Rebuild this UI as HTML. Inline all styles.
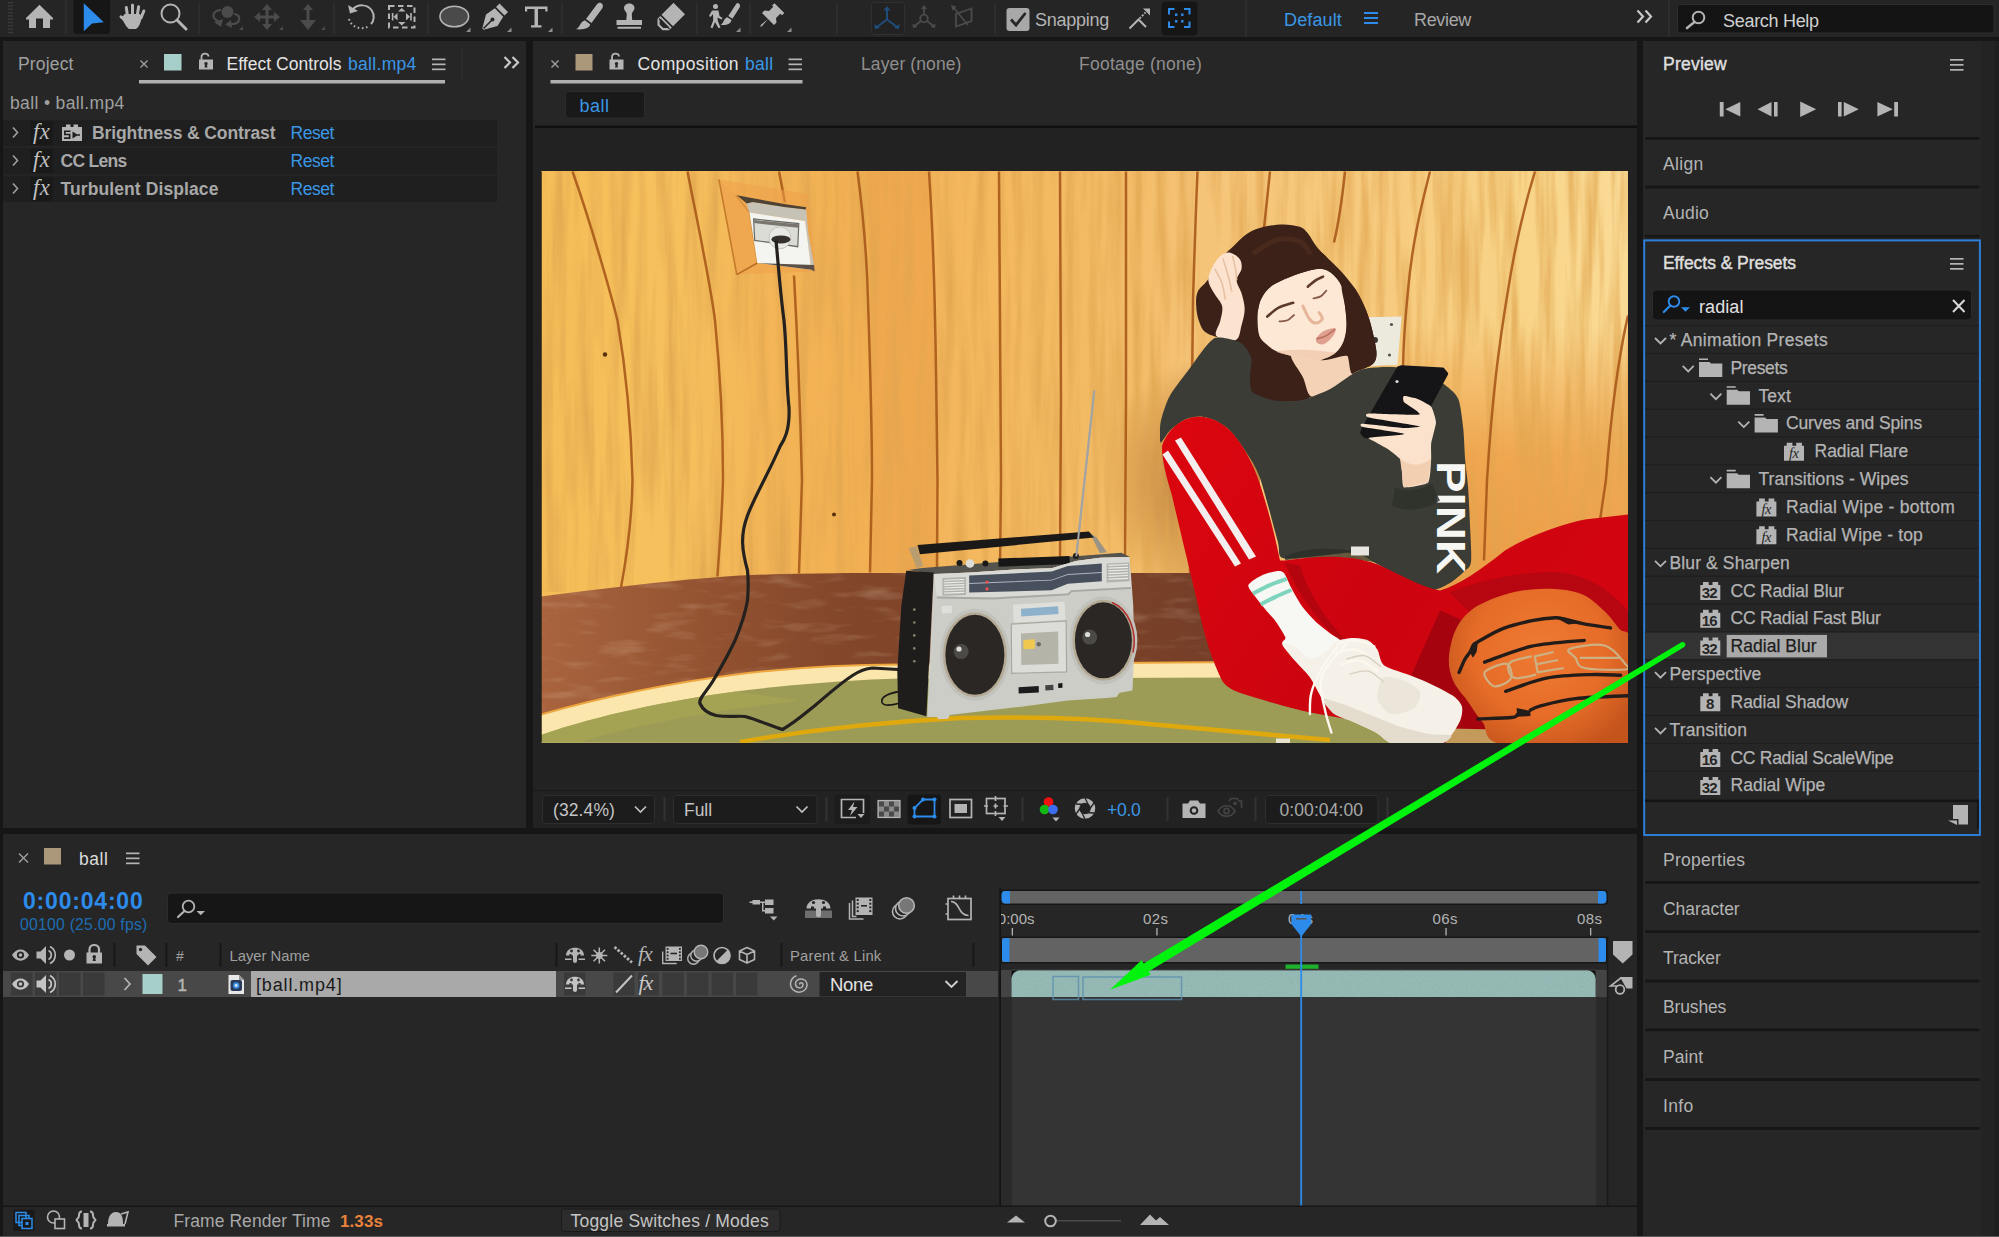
<!DOCTYPE html>
<html lang="en">
<head>
<meta charset="utf-8">
<title>After Effects - ball</title>
<style>
*{box-sizing:border-box;margin:0;padding:0}
html,body{width:1999px;height:1237px;overflow:hidden;background:#161616}
body{font-family:"Liberation Sans",sans-serif;color:#b4b4b4;font-size:17px;position:relative}
.a{position:absolute}
.p{position:absolute;background:#262626}
.t{margin-top:1.200px;position:absolute;white-space:nowrap;line-height:1;transform-origin:0 0;letter-spacing:-0.2px}
.w{color:#e6e6e6}
.b{color:#3a97e6}
.g{color:#a8a8a8}
.d{color:#8a8a8a}
.ln{position:absolute;background:#161616}
svg{position:absolute;overflow:visible}
.sb{-webkit-text-stroke:0.45px currentColor}
.tr{font-size:17.500px;color:#b4b4b4;-webkit-text-stroke:0.250px currentColor}
</style>
</head>
<body>
<!-- panel backgrounds -->
<div class="p" style="left:0;top:0;width:1999px;height:37px;background:#252525"></div>
<div class="p" style="left:3px;top:41px;width:523px;height:787px"></div>
<div class="p" style="left:533px;top:41px;width:1104px;height:787px"></div>
<div class="p" style="left:3px;top:834px;width:1634px;height:403px"></div>
<div class="p" style="left:1643px;top:41px;width:356px;height:1196px"></div>
<div class="p" style="left:1980.700px;top:41px;width:18.300px;height:1196px;background:#232323"></div>
<div class="p" style="left:1994px;top:41px;width:5px;height:1196px;background:#1f1f1f"></div>
<div class="a" style="left:533px;top:128px;width:1104px;height:662px;background:#222"></div>
<div class="a" style="left:0;top:1236px;width:1999px;height:1px;background:#5a5a5a"></div>
<!-- toolbar -->
<svg class="a" style="left:0;top:0" width="1999" height="41" viewBox="0 0 1999 41">
<g fill="#3a3a3a"><rect x="8" y="2" width="5" height="1.4"/><rect x="8" y="5.3" width="5" height="1.4"/><rect x="8" y="8.6" width="5" height="1.4"/><rect x="8" y="11.9" width="5" height="1.4"/><rect x="8" y="15.2" width="5" height="1.4"/><rect x="8" y="18.5" width="5" height="1.4"/><rect x="8" y="21.8" width="5" height="1.4"/><rect x="8" y="25.1" width="5" height="1.4"/><rect x="8" y="28.4" width="5" height="1.4"/><rect x="8" y="31.7" width="5" height="1.4"/></g>
<g fill="#2d2d2d"><rect x="65" y="0" width="2" height="34"/><rect x="198" y="3" width="2" height="31"/><rect x="333" y="3" width="2" height="31"/><rect x="427" y="3" width="2" height="31"/><rect x="561" y="3" width="2" height="31"/><rect x="696" y="3" width="2" height="31"/><rect x="749" y="3" width="2" height="31"/><rect x="836" y="3" width="2" height="31"/><rect x="994" y="3" width="2" height="31"/><rect x="1245" y="0" width="2" height="37"/><rect x="1668" y="0" width="2" height="37"/></g>
<!-- home -->
<path fill="#b4b4b4" d="M39.5 4.8 L53 18 L53 19.5 L50 19.5 L50 28 L43 28 L43 18.5 L36 18.5 L36 28 L29 28 L29 19.5 L26 19.5 L26 18 Z"/>
<!-- selection tool -->
<rect x="73.5" y="-3" width="36.5" height="37" rx="4" fill="#161616"/>
<path fill="#2d8ceb" d="M83.8 3.2 L103.8 22.3 L92 23.4 L83.8 31.2 Z"/>
<!-- hand -->
<g fill="none" stroke="#b4b4b4" stroke-width="3" stroke-linecap="round"><path d="M127.3 15 L126.3 7.5"/><path d="M132.5 14 L132.5 5"/><path d="M137.3 15 L138.6 6.8"/><path d="M141 18 L143.8 11"/><path d="M125 20 L121 16.8"/></g>
<path fill="#b4b4b4" d="M124.5 14 L140 14 L141.5 17 C141 23 139 27 136 29 L129 29 C126 27 124 22 121.5 18.5 Z"/>
<!-- zoom -->
<circle cx="170.5" cy="13.5" r="9" fill="none" stroke="#b4b4b4" stroke-width="2"/>
<path d="M177 20 L186 29" stroke="#b4b4b4" stroke-width="3" stroke-linecap="round"/>
<!-- orbit (dim) -->
<g fill="#4b4b4b" stroke="none"><circle cx="227.5" cy="12" r="6"/><path d="M239 30 L243 26 L243 30Z"/><path d="M279 30 L283 26 L283 30Z"/><path d="M321 30 L325 26 L325 30Z"/></g>
<g fill="none" stroke="#4b4b4b" stroke-width="2.2"><path d="M221 10 C214 10 211 16 216 20 L219 22"/><path d="M234 14 C241 15 241 22 234 24 L229 24"/></g>
<path fill="#4b4b4b" d="M214 22 L223 19 L221 27Z M231 20 L225 24.5 L232 28Z"/>
<!-- pan (dim) -->
<path fill="#4b4b4b" d="M267 4 L272 10 L268.5 10 L268.5 15.5 L274 15.5 L274 12 L280 17 L274 22 L274 18.5 L268.5 18.5 L268.5 24 L272 24 L267 30 L262 24 L265.5 24 L265.5 18.5 L260 18.5 L260 22 L254 17 L260 12 L260 15.5 L265.5 15.5 L265.5 10 L262 10Z"/>
<!-- dolly (dim) -->
<path fill="#4b4b4b" d="M308 4 L313 10 L309.5 10 L309.5 20 L316 20 L308 30 L300 20 L306.5 20 L306.5 10 L303 10Z"/>
<!-- rotate -->
<path fill="none" stroke="#b4b4b4" stroke-width="2" d="M353 9 C358 4 367 4 371.5 10 C375 15 374 21 371 24"/>
<path fill="#b4b4b4" d="M348 5 L350 13.5 L358 11Z"/>
<path fill="none" stroke="#b4b4b4" stroke-width="2" stroke-dasharray="1.6 2.6" d="M349 19 C351 27 362 31 369 26"/>
<!-- dashed rect w/ arrows -->
<rect x="389" y="6" width="25.5" height="21.5" fill="none" stroke="#b4b4b4" stroke-width="2" stroke-dasharray="5.5 3.5"/>
<path fill="#b4b4b4" d="M398 11.500 L401.800 8 L405.500 11.500Z M398 22 L401.800 25.500 L405.500 22Z M397.500 13 L397.500 20.500 L393.500 16.750Z M406 13 L406 20.500 L410 16.750Z M391.800 13 h1.600 v7.500 h-1.600Z M410.200 13 h1.600 v7.500 h-1.600Z"/>
<!-- ellipse -->
<ellipse cx="454.3" cy="16.5" rx="14.3" ry="10.3" fill="#4a4a4a" stroke="#b4b4b4" stroke-width="1.6"/>
<g fill="#8c8c8c"><path d="M466 32 L470.5 27.5 L470.5 32Z"/><path d="M507 32 L511.5 27.5 L511.5 32Z"/><path d="M548 32 L552.5 27.5 L552.5 32Z"/><path d="M736 32 L740.5 27.5 L740.5 32Z"/><path d="M787 32 L791.5 27.5 L791.5 32Z"/></g>
<!-- pen -->
<path fill="#b4b4b4" d="M499.5 3.5 L508 12 L504.5 15.5 L496 7Z M494.8 8.3 L503.2 16.7 L497.5 26 L483.5 29.8 L482.3 28.6 L486 14.5Z"/>
<path d="M483.5 28.5 L491.5 20.5" stroke="#252525" stroke-width="1.6"/><circle cx="492.5" cy="19.5" r="2" fill="#252525"/>
<!-- T -->
<path fill="#b4b4b4" d="M525 6.5 L547.5 6.5 L547.5 11.5 L545.3 11.5 L545.3 9 L538 9 L538 25.3 L541.5 25.3 L541.5 27.5 L531 27.5 L531 25.3 L534.5 25.3 L534.5 9 L527.2 9 L527.2 11.5 L525 11.5Z"/>
<!-- brush -->
<path fill="#b4b4b4" d="M600.500 2.800 C603 3.800 603.500 6.300 602.300 8.200 L591.500 23 L586 19 L597 4.200 C598 2.900 599.300 2.400 600.500 2.800Z M584.800 20.300 L590.200 24.300 C589.500 28 585 30 576 29.300 C580.500 27 579.500 22.500 584.800 20.300Z"/>
<!-- stamp -->
<path fill="#b4b4b4" d="M629.3 3.5 C633 3.5 634.5 6 634.5 8 C634.5 10.5 632 12 631.8 14 L632.2 20 L642 20 L642 25 L616.5 25 L616.5 20 L626.3 20 L626.8 14 C626.5 12 624 10.500 624 8 C624 6 625.600 3.500 629.3 3.500Z M617.500 26.800 L641 26.800 L641 28.800 L617.500 28.800Z"/>
<!-- eraser -->
<path fill="#b4b4b4" d="M673.5 2.8 L685 14.3 L673 26.300 L661.500 14.800Z M660.300 16 L671.800 27.500 L669 30.300 L662.500 30.300 L657.500 25.300 L657.500 18.800Z"/>
<path d="M659 18.500 L669.500 29" stroke="#252525" stroke-width="1.200" fill="none"/>
<path fill="#252525" d="M660.900 19 L668.800 26.900 L667.600 28.100 L663.300 28.100 L659.600 24.400 L659.600 20.300Z"/>
<!-- roto -->
<g fill="#b4b4b4"><circle cx="715.5" cy="6.500" r="2.500"/><path d="M712 10.500 L718.500 10.500 L719.500 16 L722.500 18 L721.500 19.500 L717.500 17.500 L717.800 21 L720.500 27.500 L718.500 28.300 L715 22 L712.500 28.300 L710.500 27.600 L713.200 20.500 L713 14 L710.500 17 L709 16Z"/>
<path d="M738.300 3.200 C740.300 4 740.500 6 739.600 7.500 L732.500 18.800 L728.300 16 L735.800 4.500 C736.500 3.400 737.400 2.900 738.300 3.200Z M727.300 17.200 L731.500 20 C731 23.500 727.500 25.500 720.500 25 C724 23.300 723 19 727.300 17.200Z"/></g>
<!-- pin -->
<path fill="#b4b4b4" d="M774.500 3.200 L784.300 13 L782 15.300 L780.300 13.800 L776 18 L776.500 22.500 L774 25 L768 19 L762 26.300 L760.300 26.800 L760.800 25 L768 19 L762 13 L764.500 10.500 L769 11 L773.300 6.800 L772 5.500Z"/>
<!-- axis modes (dim) -->
<rect x="871.5" y="2.500" width="33" height="32" rx="3" fill="#222" stroke="#303030" stroke-width="1"/>
<g stroke="#1f4d7a" stroke-width="2" fill="none"><path d="M887 19.500 L887 8 M887 19.500 L877 27 M887 19.500 L897 27"/></g>
<path fill="#1f4d7a" d="M883.500 10.500 L887 6 L890.500 10.500Z M874.500 24 L875 29 L880 28Z M899.500 24 L899 29 L894 28Z"/>
<g stroke="#4b4b4b" stroke-width="1.800" fill="none"><circle cx="924" cy="18.500" r="3.800"/><path d="M924 14.500 L924 7.500 M921 21 L914.500 26 M927 21 L933.500 26"/></g>
<path fill="#4b4b4b" d="M921 9 L924 5 L927 9Z M912.500 23.500 L913 28 L917.500 27Z M935.500 23.500 L935 28 L930.500 27Z"/>
<g stroke="#4b4b4b" stroke-width="1.800" fill="none"><path d="M956 14 L971.500 8.500 L971.500 21 L956 26.500Z M953 7 L968 25"/></g>
<path fill="#4b4b4b" d="M951 5 L956.500 6.500 L952.500 10.500Z"/>
<!-- snapping checkbox -->
<rect x="1006.500" y="8" width="23" height="23" rx="3" fill="#a8a8a8"/>
<path d="M1011 19.500 L1016 25 L1025.500 13" stroke="#252525" stroke-width="2.800" fill="none"/>
<!-- snap icon 1 -->
<path d="M1129.500 28.500 L1138.500 19.500 L1146 27" stroke="#b4b4b4" stroke-width="2" fill="none"/>
<path d="M1139.500 18.500 L1145.500 12.500" stroke="#b4b4b4" stroke-width="1.800" stroke-dasharray="2 1.500" fill="none"/>
<path fill="#b4b4b4" d="M1143 8.500 L1150 8.500 L1150 15.500Z"/>
<!-- snap icon 2 -->
<rect x="1161.500" y="1.500" width="36" height="34" rx="4" fill="#161616"/>
<g stroke="#2d8ceb" stroke-width="2" fill="none"><path d="M1169 14.500 L1169 9 L1174.500 9 M1184 9 L1189.500 9 L1189.500 14.500 M1189.500 21.500 L1189.500 27 L1184 27 M1174.500 27 L1169 27 L1169 21.500"/><path d="M1176 16 L1176 14.500 L1177.500 14.500 M1181 14.500 L1182.500 14.500 L1182.500 16 M1182.500 20 L1182.500 21.500 L1181 21.500 M1177.500 21.500 L1176 21.500 L1176 20"/></g>
<!-- workspace hamburger -->
<g fill="#2d8ceb"><rect x="1364" y="12" width="14" height="2"/><rect x="1364" y="17" width="14" height="2"/><rect x="1364" y="22" width="14" height="2"/></g>
<!-- chevrons -->
<path d="M1637.500 10.500 L1643 16.500 L1637.500 22.500 M1645.500 10.500 L1651 16.500 L1645.500 22.500" stroke="#c8c8c8" stroke-width="2.200" fill="none"/>
<!-- search help -->
<rect x="1677.500" y="4.500" width="316.500" height="28.500" rx="3" fill="#141414" stroke="#2c2c2c" stroke-width="1"/>
<circle cx="1698.500" cy="17.500" r="5.800" fill="none" stroke="#b4b4b4" stroke-width="2"/>
<path d="M1694.500 22 L1687 28" stroke="#b4b4b4" stroke-width="2.600" stroke-linecap="round"/>
</svg>
<div class="t" style="left:1035px;top:10px;font-size:18px;color:#b4b4b4;letter-spacing:-0.26px">Snapping</div>
<div class="t b" style="left:1284px;top:10px;font-size:18px;letter-spacing:0.14px">Default</div>
<div class="t" style="left:1414px;top:10px;font-size:18px;color:#a8a8a8;letter-spacing:-0.34px">Review</div>
<div class="t" style="left:1723px;top:11px;font-size:18px;color:#d0d0d0;letter-spacing:-0.30px">Search Help</div>
<!-- left panel: project / effect controls -->
<div class="t" style="left:18px;top:55px;font-size:17.5px;color:#a0a0a0;letter-spacing:0.16px">Project</div>
<svg class="a" style="left:0;top:41px" width="530" height="170" viewBox="0 41 530 170">
<path d="M140.500 60.500 L147.500 67.500 M147.500 60.500 L140.500 67.500" stroke="#a0a0a0" stroke-width="1.400"/>
<rect x="164" y="54" width="17.500" height="16.500" fill="#a6cfca"/>
<path d="M201.500 60 L201.500 57 C201.500 52.500 208.500 52.500 208.500 56.500" fill="none" stroke="#b4b4b4" stroke-width="1.800"/>
<rect x="199" y="59.500" width="14" height="10" fill="#b4b4b4"/>
<path d="M206 62 a1.700 1.700 0 1 1 -0.010 0Z M205.200 64 h1.600 l0.700 3.500 h-3Z" fill="#262626"/>
<g fill="#b4b4b4"><rect x="432" y="58.500" width="13.500" height="1.700"/><rect x="432" y="63.500" width="13.500" height="1.700"/><rect x="432" y="68.500" width="13.500" height="1.700"/></g>
<rect x="461" y="48" width="1.500" height="32" fill="#2e2e2e"/>
<path d="M504.500 57 L510 62.500 L504.500 68 M512.500 57 L518 62.500 L512.500 68" stroke="#c8c8c8" stroke-width="2.200" fill="none"/>
<rect x="139" y="80" width="306" height="3.500" fill="#b0b0b0"/>
<!-- effect rows -->
<rect x="3" y="119" width="494" height="84" fill="#1f1f1f"/>
<rect x="3" y="118.500" width="494" height="1" fill="#2a2a2a"/>
<rect x="3" y="146.500" width="494" height="1" fill="#2a2a2a"/>
<rect x="3" y="174.500" width="494" height="1" fill="#2a2a2a"/>
<rect x="3" y="202.500" width="494" height="1" fill="#2a2a2a"/>
<g stroke="#a0a0a0" stroke-width="1.600" fill="none"><path d="M13 127.500 L17.500 132.500 L13 137.500"/><path d="M13 155.500 L17.500 160.500 L13 165.500"/><path d="M13 183.500 L17.500 188.500 L13 193.500"/></g>
<g fill="#191919"><rect x="30.500" y="121" width="22" height="24"/><rect x="30.500" y="149" width="22" height="24"/><rect x="30.500" y="177" width="22" height="24"/></g>
<!-- preset icon -->
<path fill="#b4b4b4" d="M62 127 L66 127 L66 124.500 L70.500 124.500 L70.500 127 L73.500 127 L73.500 124.500 L78 124.500 L78 127 L82 127 L82 141 L62 141Z"/>
<path fill="#1f1f1f" d="M64 130.500 h6.500 v1.600 h-4.800 v1.600 h4.800 v5.200 h-6.500 v-1.600 h4.800 v-2 h-4.800Z M72.500 131.500 l5.500 3.500 l-5.500 3.500Z M72.500 134.200 h7.500 v1.600 h-7.500Z"/>
</svg>
<div class="t" style="left:10px;top:94px;font-size:17.500px;color:#a0a0a0;letter-spacing:0.36px">ball • ball.mp4</div>
<div class="t w" style="left:226.500px;top:55px;font-size:17.500px;color:#e4e4e4;letter-spacing:0.04px">Effect Controls</div>
<div class="t b" style="left:348px;top:55px;font-size:17.500px;letter-spacing:0.31px">ball.mp4</div>
<div class="t fx" style="left:33px;top:119.5px;font-size:22.500px;color:#c0c0c0;font-style:italic;letter-spacing:0.500px;font-family:'Liberation Serif',serif">fx</div>
<div class="t fx" style="left:33px;top:147.5px;font-size:22.500px;color:#c0c0c0;font-style:italic;letter-spacing:0.500px;font-family:'Liberation Serif',serif">fx</div>
<div class="t fx" style="left:33px;top:175.5px;font-size:22.500px;color:#c0c0c0;font-style:italic;letter-spacing:0.500px;font-family:'Liberation Serif',serif">fx</div>
<div class="t" style="left:92px;top:124px;font-size:17.500px;font-weight:bold;color:#a8a8a8;letter-spacing:-0.11px">Brightness &amp; Contrast</div>
<div class="t" style="left:60.500px;top:152px;font-size:17.500px;font-weight:bold;color:#a8a8a8;letter-spacing:-0.71px">CC Lens</div>
<div class="t" style="left:60.500px;top:180px;font-size:17.500px;font-weight:bold;color:#a8a8a8;letter-spacing:0.10px">Turbulent Displace</div>
<div class="t b" style="left:290.500px;top:124px;font-size:17.500px;letter-spacing:-0.44px">Reset</div>
<div class="t b" style="left:290.500px;top:152px;font-size:17.500px;letter-spacing:-0.44px">Reset</div>
<div class="t b" style="left:290.500px;top:180px;font-size:17.500px;letter-spacing:-0.44px">Reset</div>
<!-- composition panel chrome -->
<svg class="a" style="left:533px;top:41px" width="1104" height="90" viewBox="533 41 1104 90">
<path d="M551.500 60.500 L558.500 67.500 M558.500 60.500 L551.500 67.500" stroke="#a0a0a0" stroke-width="1.400"/>
<rect x="575.500" y="54" width="17" height="16.500" fill="#ab987a"/>
<path d="M612 60 L612 57 C612 52.500 619 52.500 619 56.500" fill="none" stroke="#b4b4b4" stroke-width="1.800"/>
<rect x="609.500" y="59.500" width="14" height="10" fill="#b4b4b4"/>
<path d="M616.500 62 a1.700 1.700 0 1 1 -0.010 0Z M615.700 64 h1.600 l0.700 3.500 h-3Z" fill="#262626"/>
<g fill="#b4b4b4"><rect x="788.500" y="58.500" width="13.500" height="1.700"/><rect x="788.500" y="63.500" width="13.500" height="1.700"/><rect x="788.500" y="68.500" width="13.500" height="1.700"/></g>
<rect x="550.500" y="80" width="252" height="3.500" fill="#b0b0b0"/>
<rect x="565.500" y="91.500" width="79" height="26.500" rx="3" fill="#191919" stroke="#2c2c2c" stroke-width="1"/>
<rect x="535" y="125.500" width="1102" height="2.500" fill="#101010"/>
</svg>
<div class="t" style="left:637.500px;top:55px;font-size:17.500px;color:#e4e4e4;letter-spacing:0.38px">Composition</div>
<div class="t b" style="left:745px;top:55px;font-size:17.500px;letter-spacing:0.31px">ball</div>
<div class="t" style="left:861px;top:55px;font-size:17.500px;color:#8f8f8f;letter-spacing:0.11px">Layer (none)</div>
<div class="t" style="left:1079px;top:55px;font-size:17.500px;color:#8f8f8f;letter-spacing:0.24px">Footage (none)</div>
<div class="t b" style="left:579.500px;top:96px;font-size:18px;letter-spacing:0.49px">ball</div>
<!-- comp bottom bar -->
<div class="a" style="left:533px;top:790px;width:1104px;height:38px;background:#222;border-top:1px solid #1a1a1a"></div>
<svg class="a" style="left:533px;top:790px" width="1104" height="38" viewBox="533 790 1104 38">
<rect x="542.500" y="795.500" width="112" height="28" rx="3" fill="#1c1c1c" stroke="#2e2e2e"/>
<rect x="673.500" y="795.500" width="143.500" height="28" rx="3" fill="#1c1c1c" stroke="#2e2e2e"/>
<path d="M635 806.500 L640.500 812 L646 806.500 M796.500 806.500 L802 812 L807.500 806.500" stroke="#c0c0c0" stroke-width="1.700" fill="none"/>
<g fill="#333"><rect x="663.500" y="797" width="2" height="24"/><rect x="825.500" y="797" width="2" height="24"/><rect x="1021.500" y="797" width="2" height="24"/><rect x="1166.500" y="797" width="2" height="24"/><rect x="1254.500" y="797" width="2" height="24"/><rect x="1386.500" y="797" width="2" height="24"/></g>
<!-- fast preview -->
<rect x="834.500" y="794.500" width="35.500" height="30" rx="3" fill="#1c1c1c"/>
<path d="M863.500 813 L863.500 799.500 L841.500 799.500 L841.500 817.500 L856 817.500" fill="none" stroke="#b4b4b4" stroke-width="1.700"/>
<path d="M854.500 801.500 L848 810 L852 810 L850 816 L857.500 807 L853 807Z" fill="#b4b4b4"/>
<path d="M857.500 814 L864.500 814 L861 818Z" fill="#b4b4b4"/>
<!-- transparency grid -->
<rect x="878" y="800.500" width="22" height="17" fill="#8a8a8a" stroke="#b4b4b4" stroke-width="1.200"/>
<g fill="#4a4a4a"><rect x="879" y="801.500" width="5" height="5"/><rect x="889" y="801.500" width="5" height="5"/><rect x="884" y="806.500" width="5" height="5"/><rect x="894" y="806.500" width="5" height="5"/><rect x="879" y="811.500" width="5" height="5"/><rect x="889" y="811.500" width="5" height="5"/></g>
<!-- mask toggle -->
<rect x="907.500" y="794.500" width="33.500" height="30" rx="3" fill="#161616"/>
<path d="M914.500 816.500 L914.500 808 L923 799.500 L934.500 799.500 L934.500 816.500Z" fill="none" stroke="#2d8ceb" stroke-width="1.800"/>
<g fill="#2d8ceb"><circle cx="914.500" cy="816.500" r="2"/><circle cx="914.500" cy="808" r="2"/><circle cx="923" cy="799.500" r="2"/><circle cx="934.500" cy="799.500" r="2"/><circle cx="934.500" cy="816.500" r="2"/></g>
<!-- region of interest -->
<rect x="950" y="799.500" width="21.500" height="18" fill="none" stroke="#b4b4b4" stroke-width="1.700"/>
<rect x="954.500" y="804" width="12.500" height="9" fill="#b4b4b4"/>
<!-- grid/guides -->
<g stroke="#b4b4b4" stroke-width="1.700" fill="none"><rect x="986.500" y="798.500" width="18.500" height="15"/><path d="M984 806 L988 806 M1003.500 806 L1008 806 M995.500 796 L995.500 801 M995.500 811 L995.500 816 M993.500 806 L998 806 M995.500 803.500 L995.500 808.500"/></g>
<path d="M998.500 817 L1005.500 817 L1002 821Z" fill="#b4b4b4"/>
<!-- channels -->
<circle cx="1048.500" cy="802" r="4.800" fill="#f01010"/><circle cx="1044.500" cy="809.500" r="4.800" fill="#12b812"/><circle cx="1053" cy="809.500" r="4.800" fill="#3c6cf0"/>
<path d="M1052.500 817.500 L1059.500 817.500 L1056 821.500Z" fill="#b4b4b4"/>
<!-- aperture -->
<circle cx="1085" cy="808.500" r="8" fill="none" stroke="#b4b4b4" stroke-width="4.500"/>
<g stroke="#222" stroke-width="1.300"><path d="M1085 798 L1089 806 M1094 803 L1088.500 810.500 M1094 813 L1085 812.500 M1085 819 L1081 811 M1076 814 L1081.500 806.500 M1076 804 L1085 804.500"/></g>
<!-- camera -->
<path d="M1182.500 803.500 L1188 803.500 L1190 800.500 L1198 800.500 L1200 803.500 L1205.500 803.500 L1205.500 818 L1182.500 818Z" fill="#b4b4b4"/>
<circle cx="1194" cy="810.500" r="4.300" fill="#222"/><circle cx="1194" cy="810.500" r="2.300" fill="#b4b4b4"/>
<!-- show snapshot (dim) -->
<g fill="none" stroke="#444" stroke-width="1.600"><path d="M1218 811 C1222 804 1231 804 1235 811 C1231 818 1222 818 1218 811Z"/><circle cx="1226.500" cy="811" r="2.600"/><path d="M1229 801 L1231 798.500 L1237 798.500 L1239 801 L1241.500 801 L1241.500 808"/></g>
<circle cx="1235" cy="803.500" r="1.800" fill="#444"/>
<!-- timecode -->
<rect x="1265.500" y="795.500" width="112.500" height="28" rx="3" fill="#1c1c1c" stroke="#2e2e2e"/>
</svg>
<div class="t" style="left:553px;top:801px;font-size:17.500px;color:#c4c4c4;letter-spacing:0.10px">(32.4%)</div>
<div class="t" style="left:684px;top:801px;font-size:17.500px;color:#c4c4c4;letter-spacing:-0.05px">Full</div>
<div class="t b" style="left:1107px;top:801px;font-size:17.500px;letter-spacing:-0.27px">+0.0</div>
<div class="t" style="left:1279.500px;top:801px;font-size:17.500px;color:#a8a8a8;letter-spacing:0.08px">0:00:04:00</div>
<!-- composition viewer image -->
<svg class="a" style="left:541px;top:170.500px;overflow:hidden" width="1087.400" height="572.300" viewBox="541 170.500 1087.400 572.300">
<defs>
<linearGradient id="wood" x1="541" x2="1628" y1="0" y2="0" gradientUnits="userSpaceOnUse">
<stop offset="0" stop-color="#f5bd57"/><stop offset="0.119" stop-color="#f6c15d"/><stop offset="0.22" stop-color="#f3b456"/><stop offset="0.293" stop-color="#f2b052"/><stop offset="0.367" stop-color="#f4b65c"/><stop offset="0.422" stop-color="#f4b95f"/><stop offset="0.542" stop-color="#f3bc68"/><stop offset="0.606" stop-color="#f5c478"/><stop offset="0.79" stop-color="#f7cc80"/><stop offset="0.9" stop-color="#f8d488"/><stop offset="1" stop-color="#fadb96"/>
</linearGradient>
<linearGradient id="woodv" x1="0" x2="0" y1="171" y2="575" gradientUnits="userSpaceOnUse">
<stop offset="0" stop-color="#e8862a" stop-opacity="0"/><stop offset="0.38" stop-color="#e8862a" stop-opacity="0"/><stop offset="0.7" stop-color="#ea8a2c" stop-opacity="0.6"/><stop offset="1" stop-color="#e8842a" stop-opacity="0.7"/>
</linearGradient>
<radialGradient id="shadow" cx="1230" cy="480" r="130" gradientUnits="userSpaceOnUse">
<stop offset="0" stop-color="#8a4810" stop-opacity="0.6"/><stop offset="0.6" stop-color="#95500f" stop-opacity="0.35"/><stop offset="1" stop-color="#a05a18" stop-opacity="0"/>
</radialGradient>
<filter id="grainw" x="0" y="0" width="100%" height="100%"><feTurbulence type="fractalNoise" baseFrequency="0.09 0.006" numOctaves="3" seed="7"/><feColorMatrix type="matrix" values="0 0 0 0 0.75  0 0 0 0 0.38  0 0 0 0 0.08  0 0 0 2.2 -0.85"/></filter>
<filter id="grainb" x="0" y="0" width="100%" height="100%"><feTurbulence type="fractalNoise" baseFrequency="0.02 0.09" numOctaves="3" seed="11"/><feColorMatrix type="matrix" values="0 0 0 0 0.95  0 0 0 0 0.8  0 0 0 0 0.6  0 0 0 2.4 -1.25"/></filter>
<clipPath id="bbclip"><path d="M541 596 C600 588 680 579 740 575 C800 572.500 850 572.500 902 572.500 L1240 572.500 L1240 662 L900 664 C850 664 800 666 736 674 C660 684 590 700 541 714Z"/></clipPath>
<linearGradient id="base" x1="541" x2="1220" y1="0" y2="0" gradientUnits="userSpaceOnUse">
<stop offset="0" stop-color="#a9643e"/><stop offset="0.22" stop-color="#955432"/><stop offset="0.45" stop-color="#82462a"/><stop offset="0.8" stop-color="#7c4229"/><stop offset="1" stop-color="#753e28"/>
</linearGradient>
<radialGradient id="ballg" cx="1540" cy="650" r="110" gradientUnits="userSpaceOnUse">
<stop offset="0" stop-color="#ee7a32"/><stop offset="0.6" stop-color="#e66c28"/><stop offset="1" stop-color="#c4541c"/>
</radialGradient>
<linearGradient id="redg" x1="1160" x2="1630" y1="420" y2="720" gradientUnits="userSpaceOnUse">
<stop offset="0" stop-color="#dc060e"/><stop offset="0.5" stop-color="#cc0410"/><stop offset="1" stop-color="#d6050f"/>
</linearGradient>
</defs>
<!-- wall -->
<rect x="541" y="170" width="1088" height="574" fill="url(#wood)"/>
<path d="M866 171 C872 300 872 400 870 572 L936 572 C937 400 935 300 929 171Z" fill="#efa84e"/>
<path d="M1430 171 C1405 260 1400 330 1402 600 L1628 600 L1628 171Z" fill="url(#woodv)"/>
<path d="M1090 330 L1260 330 L1260 575 L1090 575Z" fill="url(#shadow)"/>
<rect x="541" y="171" width="1087" height="420" filter="url(#grainw)" opacity="0.8"/>
<!-- plank seams -->
<g fill="none" stroke="#a9591a" stroke-width="2.500" stroke-opacity="0.9">
<path d="M572.500 171 C590 220 610 290 617.500 320 C626 370 631 420 632.500 479 C632 520 626 560 621 587"/>
<path d="M687.500 171 C697 220 710 280 715 320 C720 370 723 420 723 479 C722 520 719 550 717.500 576"/>
<path d="M779 171 L785 202 M794 275 C797 330 800 400 802 479 L799 573"/>
<path d="M857.500 171 C864 220 867 260 868 300 C870 360 872 420 872 479 L870 572"/>
<path d="M929 171 C933 230 935 300 936 370 L937.500 479 L937 572"/>
<path d="M999 171 L1000 320 L1001 479 L1000 572"/>
<path d="M1060 171 L1061 400 L1060 560"/>
<path d="M1126 171 L1126 400 L1125 560"/>
<path d="M1197.500 171 C1195 230 1194 270 1193 300 L1190 575"/>
<path d="M1270 171 L1264 228"/>
<path d="M1345 171 C1342 200 1338 225 1334 242"/>
<path d="M1430 171 C1420 210 1412 245 1408 290 C1404 330 1402 350 1402 480"/>
<path d="M1535 171 C1523 210 1515 245 1508 290 C1498 350 1492 400 1487 480 L1484 560"/>
<path d="M1628 315 C1620 350 1612 400 1606 479 L1600 520"/>
</g>
<circle cx="605" cy="354" r="2.200" fill="#5a3010"/><circle cx="834" cy="514" r="2" fill="#5a3010"/><circle cx="770" cy="588" r="2" fill="#4a2810"/>
<!-- baseboard, strip, floor -->
<rect x="541" y="735" width="1088" height="9" fill="#9c9c56"/>
<path d="M541 596 C600 588 680 579 740 575 C800 572.500 850 572.500 902 572.500 L1240 572.500 L1240 742 L541 742Z" fill="url(#base)"/>
<rect x="541" y="570" width="700" height="150" filter="url(#grainb)" opacity="0.22" clip-path="url(#bbclip)"/>
<path d="M541 714 C590 700 660 684 736 674 C800 666 850 664 900 664 L1240 661.500 L1240 742 L541 742Z" fill="#fbe6ae"/>
<path d="M541 714 C590 700 660 684 736 674 C800 666 850 664 900 664 L1240 661.500" fill="none" stroke="#eea63e" stroke-width="2"/>
<path d="M541 734.500 C600 714 670 700 736 691 C800 683 860 679 900 678 L1240 677 L1628 720 L1628 742 L541 742Z" fill="#9c9c56"/>
<path d="M541 742 L541 734.500 C600 714 670 700 736 691 L800 700 C700 712 620 728 580 742Z" fill="#a6a552" opacity="0.8"/>
<path d="M740 741.500 C800 731 880 721.500 960 717.500 C1040 715.500 1100 718 1160 724.500 C1220 730 1260 733 1330 739.500" fill="none" stroke="#dfa90e" stroke-width="4.500"/>
<rect x="1276" y="738" width="14" height="5" fill="#e8e2cc"/>
<!-- outlet -->
<path d="M718.9 178.9 L808.3 193.7 L815.6 270.9 L736.8 274.1Z" fill="#eea04a" opacity="0.55"/>
<path d="M718.9 178.9 L735.7 194.7 L749.4 212.0 L757.3 262.5 L736.8 274.1Z" fill="#f0a850"/>
<path d="M718.9 178.9 L736.8 274.1" fill="none" stroke="#c47a2a" stroke-width="1.600"/>
<path d="M735.7 194.7 L749.4 212.0 L757.3 262.5" fill="none" stroke="#d08a38" stroke-width="1.200"/>
<path d="M736.8 274.1 L757.3 262.5" fill="none" stroke="#b86e22" stroke-width="1.600"/>
<path d="M746.3 202.6 L752.6 201.5 L784.1 206.3 L806.2 208.9 L808.3 233.1 L814.1 264.6 L811.4 269.3 L805.1 220.5 L749.4 212.0Z" fill="#c6c2b6"/>
<path d="M736.8 194.7 L784.1 203.6 L806.2 206.8 L805.7 209.1 L784.1 206.5 L752.6 201.5 L746.8 203.1Z" fill="#4e4234"/>
<path d="M749.4 212.0 L805.1 220.5 L811.4 269.3 L757.3 262.5Z" fill="#f4f4f0"/>
<path d="M757.3 262.5 L811.4 269.3 L814.6 270.9 L814.1 264.6Z" fill="#5a5048"/>
<path d="M753.6 218.4 L798.8 223.1 L797.8 246.2 L754.7 239.9Z" fill="#dcdcd6" stroke="#6a6a64" stroke-width="1.200"/>
<path d="M754.1 219.4 L798.3 223.8 L798.2 227.3 L754.2 222.6Z" fill="#77756e"/>
<circle cx="779.9" cy="237.3" r="11" fill="#e8e8e4" stroke="#c4c4be" stroke-width="1"/>
<ellipse cx="780.9" cy="238.9" rx="9.500" ry="4" fill="#34302c"/>
<!-- cable -->
<path d="M776 240 C778 260 780 290 784 320 C787 350 786 380 789 407 C790 430 784 440 780 446 C770 470 755 495 747.500 515 C740 535 742 550 747.500 570 C749 585 748 592 747.500 600 C745 615 740 628 735 640 C728 655 722 665 715 677 C708 690 698 698 700 703 C703 710 708 713 716 715 C730 717 738 715 745 716 C760 720 772 726 782.500 729 C795 722 805 713 815 705 C828 694 840 683 852.500 675 C860 670 866 668 872.500 667.500 L898 669" fill="none" stroke="#24211e" stroke-width="3.200" stroke-linejoin="round"/>
<path d="M905 690 C890 692 880 696 882 702 C884 707 900 704 912 698 C920 692 922 684 918 672" fill="none" stroke="#1c1a18" stroke-width="1.800"/>
<!-- wall plate -->
<path d="M1356.300 317 L1401.600 316 L1397.500 364.600 L1370 365.500Z" fill="#eceadc"/>
<circle cx="1391.500" cy="324" r="1.600" fill="#555"/><circle cx="1389.500" cy="354.500" r="1.600" fill="#555"/><circle cx="1375" cy="339.500" r="3" fill="#3a3430"/>
<!-- antenna -->
<path d="M1076.300 556 L1094.300 390" stroke="#a4a4a2" stroke-width="2" fill="none"/>
<!-- radio -->
<path d="M908.6 547.6 L916.7 545.7 L923.1 565.4 L916.7 567.4Z" fill="#b99d6e"/>
<path d="M1089.7 532.3 L1096.6 537.1 L1107.0 551.7 L1099.9 552.8Z" fill="#9a9486"/>
<path d="M917.5 544.4 L1088.9 531.1 L1094.0 537.1 L919.9 553.8Z" fill="#1b1918"/>
<path d="M907.8 569.5 L922.3 567.4 L1121.2 552.2 L1130.1 556.5 L1100.2 557.3 L1075.9 560.6 L1051.7 567.8 L1019.3 568.7 L970.8 571.9 L933.7 573.5Z" fill="#55534e"/>
<path d="M998.3 558.1 L1069.5 555.4 L1069.8 563.5 L998.6 566.2Z" fill="#161616"/>
<circle cx="970.0" cy="563.0" r="4.300" fill="#deded8"/>
<circle cx="959.5" cy="562.5" r="3" fill="#1a1a1a"/>
<circle cx="985.4" cy="563.0" r="3" fill="#1a1a1a"/>
<circle cx="1075.9" cy="555.4" r="3" fill="#1a1a1a"/>
<path d="M906.2 570.3 L933.7 571.9 L926.4 715.8 L898.1 707.7 L897.3 670.5 L901.3 605.8Z" fill="#1f1d1b"/>
<circle cx="914.3" cy="609.1" r="1.300" fill="#8a8370"/>
<circle cx="914.3" cy="622.0" r="1.300" fill="#8a8370"/>
<circle cx="914.3" cy="634.9" r="1.300" fill="#8a8370"/>
<circle cx="914.3" cy="647.9" r="1.300" fill="#8a8370"/>
<circle cx="914.3" cy="660.8" r="1.300" fill="#8a8370"/>
<path d="M933.7 573.5 L970.8 571.9 L1019.3 568.7 L1051.7 567.8 L1075.9 560.6 L1100.2 557.3 L1129.3 556.5 L1130.9 573.5 L1133.3 605.8 L1134.1 654.3 L1132.5 689.9 L1119.6 692.3 L1116.4 696.4 L1109.9 697.2 L1067.8 699.9 L1019.3 706.4 L970.8 712.1 L949.8 714.5 L948.2 718.2 L938.5 718.7 L936.9 716.6 L927.2 716.6Z" fill="#cdcdc8"/>
<path d="M933.7 573.5 L970.8 571.9 L1019.3 568.7 L1051.7 567.8 L1075.9 560.6 L1100.2 557.3 L1129.3 556.5 L1130.9 586.4 L1071.1 589.7 L1067.8 592.9 L993.5 596.9 L936.9 596.1Z" fill="#d9d9d5"/>
<path d="M936.9 596.1 L993.5 596.9 L1067.8 592.9 L1071.1 589.7 L1130.9 586.4 L1130.9 588.4 L1071.9 591.6 L1068.7 594.8 L993.5 598.9 L936.9 598.1Z" fill="#a9a9a4"/>
<path d="M969.2 575.1 L1051.7 571.1 L1067.8 565.4 L1101.8 563.0 L1101.8 580.8 L1067.8 583.2 L1051.7 589.7 L969.2 592.1Z" fill="#47505c"/>
<path d="M969.2 582.4 L1051.7 579.2 L1067.8 573.5 L1101.8 571.4 L1101.8 572.4 L1067.8 574.5 L1051.7 580.1 L969.2 583.4Z" fill="#aeb6c0"/>
<circle cx="987.0" cy="581.6" r="1.600" fill="#f05050"/>
<circle cx="987.0" cy="588.4" r="1.600" fill="#f05050"/>
<path d="M942.5 577.5 L966.0 576.4 L966.0 594.5 L942.5 595.3Z" fill="#b2b2ae"/>
<path d="M1106.7 563.0 L1129.3 561.9 L1129.6 580.8 L1106.7 581.9Z" fill="#b2b2ae"/>
<path d="M944.2 579.2 L964.4 578.4 L964.4 579.5 L944.2 580.3Z" fill="#ecece8"/>
<path d="M1108.3 564.3 L1128.0 563.5 L1128.0 564.6 L1108.3 565.4Z" fill="#ecece8"/>
<path d="M944.2 581.8 L964.4 580.9 L964.4 582.1 L944.2 582.9Z" fill="#ecece8"/>
<path d="M1108.3 567.0 L1128.0 566.2 L1128.0 567.4 L1108.3 568.2Z" fill="#ecece8"/>
<path d="M944.2 584.3 L964.4 583.5 L964.4 584.7 L944.2 585.5Z" fill="#ecece8"/>
<path d="M1108.3 569.8 L1128.0 569.0 L1128.0 570.1 L1108.3 570.9Z" fill="#ecece8"/>
<path d="M944.2 586.9 L964.4 586.1 L964.4 587.2 L944.2 588.1Z" fill="#ecece8"/>
<path d="M1108.3 572.5 L1128.0 571.7 L1128.0 572.9 L1108.3 573.7Z" fill="#ecece8"/>
<path d="M944.2 589.5 L964.4 588.7 L964.4 589.8 L944.2 590.6Z" fill="#ecece8"/>
<path d="M1108.3 575.3 L1128.0 574.5 L1128.0 575.6 L1108.3 576.4Z" fill="#ecece8"/>
<path d="M944.2 592.1 L964.4 591.3 L964.4 592.4 L944.2 593.2Z" fill="#ecece8"/>
<path d="M1108.3 578.0 L1128.0 577.2 L1128.0 578.4 L1108.3 579.2Z" fill="#ecece8"/>
<ellipse cx="974.9" cy="654.3" rx="35" ry="46" fill="#c2c2bc"/>
<ellipse cx="1103.4" cy="639.8" rx="34" ry="44" fill="#c2c2bc"/>
<ellipse cx="974.9" cy="654.3" rx="32" ry="42.500" fill="#b4aa94"/>
<ellipse cx="974.9" cy="654.3" rx="29.500" ry="40" fill="#2a2725"/>
<ellipse cx="1103.4" cy="639.8" rx="31" ry="40.500" fill="#b4aa94"/>
<ellipse cx="1103.4" cy="639.8" rx="28.500" ry="38" fill="#2a2725"/>
<path d="M1112 602 A31 40.500 0 0 1 1133 652" fill="none" stroke="#b03030" stroke-width="1.500"/>
<circle cx="961.1" cy="651.1" r="7.500" fill="#4c4a46"/><circle cx="959" cy="648.500" r="2.600" fill="#dcdcd8"/>
<circle cx="1089.7" cy="636.6" r="7.500" fill="#4c4a46"/><circle cx="1087.600" cy="634" r="2.600" fill="#dcdcd8"/>
<path d="M1012.9 604.2 L1064.6 601.0 L1065.4 619.6 L1013.7 622.0Z" fill="#dededa"/>
<path d="M1021.0 608.3 L1058.1 605.8 L1058.5 613.6 L1021.3 615.9Z" fill="#8fb2cc"/>
<path d="M1011.3 623.6 L1066.2 620.4 L1066.6 671.3 L1011.6 672.9Z" fill="#dcdcd8"/>
<path d="M1011.3 623.6 L1066.2 620.4 L1066.6 671.3 L1011.6 672.9Z" fill="none" stroke="#a8a8a2" stroke-width="1.200"/>
<path d="M1021.0 633.0 L1058.1 630.9 L1058.5 663.2 L1021.3 664.4Z" fill="#b4b4a8"/>
<path d="M1023.4 639.5 L1034.7 638.8 L1034.9 648.2 L1023.5 648.8Z" fill="#f0c850"/>
<circle cx="1038.7" cy="643.8" r="2.200" fill="#6a6a64"/>
<path d="M1018.5 686.7 L1038.7 685.4 L1038.9 691.9 L1018.7 693.1Z" fill="#1c1c1c"/>
<path d="M1045.2 684.7 L1053.3 684.3 L1053.5 689.6 L1045.4 690.1Z" fill="#444"/>
<path d="M1058.1 683.0 L1062.4 682.6 L1062.5 687.2 L1058.3 687.5Z" fill="#161616"/>
<path d="M941.7 605.5 L951.8 605.0 L951.9 612.6 L941.9 613.1Z" fill="#dededa"/>
<path d="M1076.300 556 L1094.300 390" stroke="#a4a4a2" stroke-width="2" fill="none"/>
<!-- woman: hair back -->
<path d="M1197.8 291 C1199.7 286.7 1203.7 285.1 1207.5 279.7 C1211.3 274.3 1216.1 264.3 1220.4 258.7 C1224.7 253 1228.8 250 1233.4 245.7 C1238 241.4 1242.8 236 1247.9 232.8 C1253 229.6 1258.2 227.8 1264.1 226.3 C1270 224.8 1277.6 223.9 1283.5 223.9 C1289.4 223.9 1295.6 224.8 1299.7 226.3 C1303.7 227.8 1304.8 229.3 1307.8 232.8 C1310.7 236.3 1313.7 242.8 1317.5 247.3 C1321.2 251.9 1326.4 256.2 1330.4 260.3 C1334.5 264.3 1337.7 267 1341.7 271.6 C1345.8 276.2 1351.2 282.7 1354.7 287.8 C1358.2 292.9 1360.3 297.2 1362.8 302.3 C1365.2 307.5 1367.3 312.6 1369.2 318.5 C1371.1 324.4 1372.9 332 1374.1 337.9 C1375.3 343.8 1376.8 349.8 1376.5 354.1 C1376.2 358.4 1375.6 361.1 1372.5 363.8 C1369.4 366.5 1361.4 368.8 1357.9 370.3 C1354.4 371.7 1354.1 371.6 1351.4 372.7 C1348.7 373.8 1346 373.9 1341.7 376.7 C1337.4 379.6 1332 385.9 1325.6 389.7 C1319.1 393.4 1308.3 397.6 1302.9 399.4 C1297.5 401.1 1298.6 399.9 1293.2 400.2 C1287.8 400.5 1277.3 401.4 1270.6 401 C1263.8 400.6 1257.1 400.5 1252.8 397.8 C1248.5 395.1 1245.5 391 1244.7 384.8 C1243.9 378.6 1249.8 367.6 1247.9 360.6 C1246 353.6 1240.1 347.4 1233.4 342.8 C1226.6 338.2 1213.2 336.6 1207.5 333.1 C1201.8 329.6 1201.3 326.3 1199.4 321.7 C1197.5 317.2 1196.4 310.7 1196.2 305.6 C1195.9 300.4 1195.9 295.3 1197.8 291Z" fill="#3c2119"/>
<path d="M1291.6 354.1 C1294.8 351.3 1312.9 359.5 1322.3 359.8 C1331.8 360 1342.9 353.6 1348.2 355.7 C1353.5 357.9 1356.3 367.6 1353.9 372.7 C1351.4 377.8 1340.7 382.5 1333.6 386.4 C1326.6 390.3 1316.9 397.8 1311.8 396.1 C1306.7 394.5 1306.3 383.7 1302.9 376.7 C1299.5 369.7 1288.4 356.9 1291.6 354.1Z" fill="#f3d2b6"/>
<path d="M1257.6 315.3 C1257.9 309.3 1258.7 304 1260.9 299.1 C1263 294.2 1265.7 289.9 1270.6 286.2 C1275.4 282.4 1283.5 279.2 1290 276.5 C1296.4 273.8 1304 271.3 1309.4 270 C1314.8 268.6 1318.6 267.8 1322.3 268.4 C1326.1 268.9 1328.8 270.3 1332 273.2 C1335.3 276.2 1339.6 280.8 1341.7 286.2 C1343.9 291.6 1344.2 299.1 1345 305.6 C1345.8 312 1346.9 319 1346.6 325 C1346.3 330.9 1345.2 336.6 1343.4 341.2 C1341.5 345.7 1338.8 349.5 1335.3 352.5 C1331.8 355.4 1326.1 357.8 1322.3 358.9 C1318.6 360.1 1317.5 359.8 1312.6 359.3 C1307.8 358.7 1299.1 357.1 1293.2 355.7 C1287.3 354.3 1281.4 352.7 1277 350.9 C1272.7 349 1270.3 347.1 1267.3 344.4 C1264.4 341.7 1260.9 339.5 1259.2 334.7 C1257.6 329.8 1257.4 321.2 1257.6 315.3Z" fill="#fde8d6"/>
<path d="M1243.1 305.6 C1245.5 308.8 1253 313.1 1256 312 C1259 311 1258.4 303.4 1260.9 299.1 C1263.3 294.8 1265.7 289.9 1270.6 286.2 C1275.4 282.4 1283.5 279.2 1290 276.5 C1296.4 273.8 1304 271.3 1309.4 270 C1314.8 268.6 1318.6 268.2 1322.3 268.4 C1326.1 268.5 1331.5 273 1332 270.8 C1332.6 268.6 1330.4 260.2 1325.6 255.4 C1320.7 250.7 1312.1 244.4 1302.9 242.5 C1293.8 240.6 1279.7 241.7 1270.6 244.1 C1261.4 246.5 1253 253 1247.9 257.1 C1242.8 261.1 1241.7 264.6 1239.8 268.4 C1238 272.1 1236.3 275.7 1236.6 279.7 C1236.9 283.7 1240.4 288.3 1241.5 292.6 C1242.5 296.9 1240.7 302.3 1243.1 305.6Z" fill="#3c2119"/>
<path d="M1256 313.7 C1258.2 316.9 1256.3 331.4 1257.6 337.9 C1259 344.4 1260.9 347.4 1264.1 352.5 C1267.3 357.6 1272.2 363.3 1277 368.6 C1281.9 374 1287.8 380.1 1293.2 384.8 C1298.6 389.5 1309.4 394.3 1309.4 397 C1309.4 399.6 1299.7 400.3 1293.2 401 C1286.7 401.7 1277.3 401.5 1270.6 401 C1263.8 400.5 1257.1 400.5 1252.8 397.8 C1248.5 395.1 1245.2 391 1244.7 384.8 C1244.2 378.6 1249.5 368.4 1249.5 360.6 C1249.5 352.7 1245.5 344.9 1244.7 337.9 C1243.9 330.9 1242.8 322.6 1244.7 318.5 C1246.6 314.5 1253.9 310.4 1256 313.7Z" fill="#3c2119"/>
<path d="M1341.7 286.2 C1342.3 282.4 1346 282.7 1348.2 282.9 C1350.4 283.2 1352.2 284.5 1354.7 287.8 C1357.1 291 1360.3 297.2 1362.8 302.3 C1365.2 307.5 1367.3 312.6 1369.2 318.5 C1371.1 324.4 1372.9 332 1374.1 337.9 C1375.3 343.8 1376.8 349.8 1376.5 354.1 C1376.2 358.4 1375.6 361.1 1372.5 363.8 C1369.4 366.5 1361.4 368.8 1357.9 370.3 C1354.4 371.7 1353.1 374.8 1351.4 372.7 C1349.8 370.5 1349.3 362 1348.2 357.3 C1347.1 352.6 1345.2 349.8 1345 344.4 C1344.7 339 1346.6 331.4 1346.6 325 C1346.6 318.5 1345.8 312 1345 305.6 C1344.2 299.1 1341.2 289.9 1341.7 286.2Z" fill="#3c2119"/>
<path d="M1254.4 252.2 C1258.2 250 1269.5 241.1 1277 239.3 C1284.6 237.4 1294.3 238.7 1299.7 240.9 C1305.1 243 1307.8 250.3 1309.4 252.2" fill="none" stroke="#5a3324" stroke-width="5" stroke-linecap="round" opacity="0.45"/>
<path d="M1267.3 316.1 C1269.2 314.6 1274.3 309.5 1278.7 307.2 C1283 304.9 1290.8 303.1 1293.2 302.3" fill="none" stroke="#5b3a2b" stroke-width="2.600" stroke-linecap="round"/>
<path d="M1307.8 286.2 C1309.1 285.1 1313.3 281.4 1315.9 279.7 C1318.4 278 1321.9 276.7 1323.1 276.1" fill="none" stroke="#5b3a2b" stroke-width="2.600" stroke-linecap="round"/>
<path d="M1279.5 320.9 C1280.8 320.7 1285.1 320.9 1287.6 319.8 C1290 318.7 1292.9 315.4 1294 314.5" fill="none" stroke="#8a5a48" stroke-width="1.800" stroke-linecap="round"/>
<path d="M1313.4 297.8 C1314.6 297.5 1318.6 297.1 1320.7 295.9 C1322.9 294.6 1325.4 291.1 1326.4 290.2" fill="none" stroke="#8a5a48" stroke-width="1.800" stroke-linecap="round"/>
<path d="M1302.9 305.6 C1304 307.7 1307.2 315.7 1309.4 318.5 C1311.5 321.3 1313.7 322.6 1315.9 322.6 C1318 322.6 1321.8 320.3 1322.3 318.5 C1322.9 316.8 1319.6 313.1 1319.1 312" fill="none" stroke="#e6b698" stroke-width="3" stroke-linecap="round"/>
<path d="M1315.9 338.7 C1316.4 336.7 1319.9 333.2 1322.3 331.4 C1324.8 329.7 1328.2 328.8 1330.4 328.2 C1332.6 327.7 1335 327.1 1335.6 328.2 C1336.1 329.3 1335.3 332.3 1333.6 334.7 C1332 337.1 1328 341.3 1325.6 342.8 C1323.1 344.3 1320.7 344.3 1319.1 343.6 C1317.5 342.9 1315.3 340.7 1315.9 338.7Z" fill="#e0a090"/>
<path d="M1316.7 338.2 C1318.1 337.8 1322.5 337.1 1325.6 335.5 C1328.7 333.9 1333.6 329.8 1335.3 328.7" fill="none" stroke="#b87060" stroke-width="1.600"/>
<path d="M1277 350.9 C1275.4 351.9 1287.3 354.3 1293.2 355.7 C1299.1 357.1 1307.8 358.7 1312.6 359.3 C1317.5 359.8 1318.6 360.1 1322.3 358.9 C1326.1 357.8 1334.7 353.8 1335.3 352.5 C1335.8 351.1 1331 351.4 1325.6 350.9 C1320.2 350.3 1311 349.2 1302.9 349.2 C1294.8 349.2 1278.7 349.8 1277 350.9Z" fill="#eec4a6" opacity="0.7"/>
<path d="M1208.3 279.7 C1208 275.4 1210.3 270.8 1212.3 266.8 C1214.4 262.7 1217.5 257.9 1220.4 255.4 C1223.4 253 1226.9 251.7 1230.1 252.2 C1233.4 252.7 1238 256 1239.8 258.7 C1241.7 261.4 1242 264.9 1241.5 268.4 C1240.9 271.9 1236.6 275.7 1236.6 279.7 C1236.6 283.7 1240.1 287.8 1241.5 292.6 C1242.8 297.5 1244.7 303.4 1244.7 308.8 C1244.7 314.2 1242.9 319.9 1241.5 325 C1240 330.1 1240 337.8 1235.8 339.5 C1231.6 341.3 1219 338.7 1216.4 335.5 C1213.8 332.3 1219.5 325.1 1220.4 320.1 C1221.4 315.1 1223.1 310.2 1222.1 305.6 C1221 301 1216.3 296.9 1214 292.6 C1211.7 288.3 1208.6 284 1208.3 279.7Z" fill="#fbe3cf"/>
<path d="M1214.8 268.4 C1216 270.8 1220.3 277.8 1222.1 282.9 C1223.8 288 1224.7 296.4 1225.3 299.1" fill="none" stroke="#e8c0a2" stroke-width="1.600"/>
<path d="M1222.9 257.9 C1223.8 261 1227 270.9 1228.5 276.5 C1230 282 1231.2 288.6 1231.8 291" fill="none" stroke="#e8c0a2" stroke-width="1.600"/>
<path d="M1232.6 255.4 C1233.1 257.9 1235.1 265.9 1235.8 270 C1236.5 274 1236.5 278.1 1236.6 279.7" fill="none" stroke="#e8c0a2" stroke-width="1.600"/>
<!-- sweater -->
<clipPath id="swclip"><path d="M1215 337.5 C1217.9 336.3 1223.5 337.3 1227 338 C1230.5 338.7 1238.3 340.2 1241.5 342.8 C1244.7 345.4 1250.1 352.8 1251.2 357.3 C1252.3 361.8 1249.8 372.1 1250 376.7 C1250.2 381.3 1249.7 388.9 1253 392 C1256.3 395.1 1268.7 398.9 1275 400 C1281.3 401.1 1294 400.9 1300 400 C1306 399.1 1315.5 394.8 1320 393 C1324.5 391.2 1329.1 389.1 1333.6 386.4 C1338.1 383.7 1349.4 375.2 1353.9 372.7 C1358.4 370.2 1361.7 368.6 1367.6 367.8 C1373.5 367 1389.7 366 1398 367 C1406.3 368 1423.6 372.6 1430 375 C1436.4 377.4 1441.9 381.9 1445.7 385 C1449.5 388.1 1456 392.8 1458.3 398.5 C1460.6 404.2 1462.3 419.6 1463.2 427.6 C1464.1 435.6 1464.5 450.8 1465.1 458.6 C1465.7 466.4 1467.3 477 1468 485.8 C1468.7 494.6 1469.6 514.5 1470 524.6 C1470.4 534.7 1471.8 555.2 1471 561.4 C1470.2 567.6 1466.8 568.2 1464 571 C1461.2 573.8 1454.5 580 1450 582.5 C1445.5 585 1436 590.3 1430 590 C1424 589.7 1411.7 583.3 1405 580 C1398.3 576.7 1386.7 568.7 1380 565 C1373.3 561.3 1363.3 553.8 1355 552.5 C1346.7 551.2 1327.2 554.8 1317.5 555.5 C1307.8 556.2 1287.8 559.6 1282.5 557.5 C1277.2 555.4 1280.5 550.7 1277.5 540 C1274.5 529.3 1264.3 489.5 1260 477.5 C1255.7 465.5 1249 456.3 1245 450 C1241 443.7 1234 434 1230 430 C1226 426 1219 421.9 1215 420 C1211 418.1 1204 416.1 1200 416 C1196 415.9 1189 417.1 1185 419 C1181 420.9 1173.2 426.9 1170 430 C1166.8 433.1 1162.3 441.3 1161 442 C1159.7 442.7 1160 437.9 1160 435 C1160 432.1 1159.7 425.3 1161 420 C1162.3 414.7 1166.1 402 1170 395 C1173.9 388 1185.3 373.9 1190 367.5 C1194.7 361.1 1201.7 351 1205 347 C1208.3 343 1212.1 338.7 1215 337.5Z"/></clipPath>
<path d="M1215 337.5 C1217.9 336.3 1223.5 337.3 1227 338 C1230.5 338.7 1238.3 340.2 1241.5 342.8 C1244.7 345.4 1250.1 352.8 1251.2 357.3 C1252.3 361.8 1249.8 372.1 1250 376.7 C1250.2 381.3 1249.7 388.9 1253 392 C1256.3 395.1 1268.7 398.9 1275 400 C1281.3 401.1 1294 400.9 1300 400 C1306 399.1 1315.5 394.8 1320 393 C1324.5 391.2 1329.1 389.1 1333.6 386.4 C1338.1 383.7 1349.4 375.2 1353.9 372.7 C1358.4 370.2 1361.7 368.6 1367.6 367.8 C1373.5 367 1389.7 366 1398 367 C1406.3 368 1423.6 372.6 1430 375 C1436.4 377.4 1441.9 381.9 1445.7 385 C1449.5 388.1 1456 392.8 1458.3 398.5 C1460.6 404.2 1462.3 419.6 1463.2 427.6 C1464.1 435.6 1464.5 450.8 1465.1 458.6 C1465.7 466.4 1467.3 477 1468 485.8 C1468.7 494.6 1469.6 514.5 1470 524.6 C1470.4 534.7 1471.8 555.2 1471 561.4 C1470.2 567.6 1466.8 568.2 1464 571 C1461.2 573.8 1454.5 580 1450 582.5 C1445.5 585 1436 590.3 1430 590 C1424 589.7 1411.7 583.3 1405 580 C1398.3 576.7 1386.7 568.7 1380 565 C1373.3 561.3 1363.3 553.8 1355 552.5 C1346.7 551.2 1327.2 554.8 1317.5 555.5 C1307.8 556.2 1287.8 559.6 1282.5 557.5 C1277.2 555.4 1280.5 550.7 1277.5 540 C1274.5 529.3 1264.3 489.5 1260 477.5 C1255.7 465.5 1249 456.3 1245 450 C1241 443.7 1234 434 1230 430 C1226 426 1219 421.9 1215 420 C1211 418.1 1204 416.1 1200 416 C1196 415.9 1189 417.1 1185 419 C1181 420.9 1173.2 426.9 1170 430 C1166.8 433.1 1162.3 441.3 1161 442 C1159.7 442.7 1160 437.9 1160 435 C1160 432.1 1159.7 425.3 1161 420 C1162.3 414.7 1166.1 402 1170 395 C1173.9 388 1185.3 373.9 1190 367.5 C1194.7 361.1 1201.7 351 1205 347 C1208.3 343 1212.1 338.7 1215 337.5Z" fill="#3a3c35"/>
<g clip-path="url(#swclip)"><text transform="translate(1437.500 460.500) rotate(90)" font-family="'Liberation Sans',sans-serif" font-size="40" font-weight="bold" textLength="113" lengthAdjust="spacingAndGlyphs" fill="#f6f6f2">PINK</text></g>
<path d="M1285 556 C1300 548 1330 546 1356 551 L1380 563 C1350 556 1310 556 1285 560Z" fill="#2a2c26" opacity="0.7"/>
<path d="M1395 487 C1405 492 1420 490 1432 483 L1440 500 C1425 510 1405 512 1392 505Z" fill="#2e302a" opacity="0.8"/>
<rect x="1351" y="546" width="18" height="9" fill="#e8e6e0"/>
<!-- phone + hand -->
<path d="M1398.2 367.5 L1401.1 366.3 L1442.8 368.4 L1446.7 373.3 L1431.2 402.4 L1417.6 427.6 L1413.7 439.2 L1365.2 436.3 L1361.7 432.4 L1362.9 428.5Z" fill="#151517" stroke="#151517" stroke-width="3" stroke-linejoin="round"/>
<path d="M1404 395.6 C1405.1 395.3 1415.3 397.6 1417.6 398.5 C1419.8 399.4 1429.6 404.3 1431.2 406.2 C1432.7 408.2 1436 418.7 1436 421.8 C1436 424.8 1431.6 440 1431.2 443.1 C1430.8 446.2 1431.4 455.4 1431.2 458.6 C1430.9 461.8 1430.5 479.5 1428.2 481.9 C1426 484.2 1406.2 487.7 1404 486.7 C1401.8 485.8 1402.4 472.6 1402.1 470.2 C1401.7 467.9 1401.3 460.4 1400.1 458.6 C1399 456.8 1390.6 450.4 1388.5 448.9 C1386.4 447.5 1376.5 442.1 1374.9 441.2 C1373.3 440.2 1366.7 437.9 1369.1 437.3 C1371.5 436.6 1404.5 434.3 1404 433.4 C1403.5 432.5 1366.7 427.5 1363.3 426.6 C1359.8 425.8 1359.5 423.2 1362.9 423.3 C1366.3 423.4 1399.3 427.4 1404 427.6 C1408.7 427.8 1422.4 426.5 1419.5 425.6 C1416.6 424.8 1373.3 418 1369.1 416.9 C1364.9 415.9 1364.9 413.3 1369.1 413 C1373.3 412.8 1416.6 415 1419.5 414 C1422.4 413 1405.3 402.9 1404 401.4 C1402.7 399.9 1402.9 395.8 1404 395.6Z" fill="#fbe2cc"/>
<path d="M1400 458 C1410 466 1422 466 1431 458 L1428 482 L1404 487Z" fill="#f3cfb2"/>
<circle cx="1397" cy="381" r="1.600" fill="#d8d8d8"/>
<!-- pants -->
<path d="M1162 446 C1166 432 1178 420 1192 417 C1208 414 1222 422 1232 432 C1246 448 1256 470 1262 490 C1268 510 1274 530 1280 560 L1285 560 C1320 555 1350 554 1378 564 C1400 574 1420 586 1440 590 C1460 584 1480 570 1505 550 C1530 535 1560 524 1585 519 L1628 514 L1628 642 C1610 632 1590 612 1565 596 C1550 590 1535 588 1520 590 C1495 596 1470 615 1455 640 C1448 655 1446 675 1452 700 L1462 712 L1470 726 L1440 735 L1310 712 C1290 708 1265 700 1245 694 C1232 690 1226 686 1222 680 C1212 660 1204 635 1198 605 C1190 570 1180 530 1172 495 C1166 475 1162 460 1162 446Z" fill="url(#redg)"/>
<path d="M1285 562 C1300 600 1330 640 1370 660 C1340 640 1310 600 1300 565Z" fill="#a80610" opacity="0.7"/>
<path d="M1450 592 C1480 580 1520 570 1560 572 C1590 575 1610 590 1628 610 L1628 642 C1610 632 1590 612 1565 596 C1535 586 1500 590 1470 612Z" fill="#b00812" opacity="0.8"/>
<path d="M1175 440 L1181 437 L1256 556 L1249 559Z" fill="#f4eeee"/>
<path d="M1162.500 454 L1168 450 L1241 563 L1235 566Z" fill="#f4eeee"/>
<!-- basketball -->
<path d="M1440 610 L1475 625 L1475 700 L1495 728 L1515 743 L1420 743 L1400 700Z" fill="#a5040f"/>
<path d="M1452 728 L1495 729 L1515 743 L1445 743Z" fill="#c39a5a"/>
<path d="M1448.9 657.3 C1449.4 648.6 1452.1 636.5 1456.2 628.2 C1460.3 620 1465.9 613.4 1473.7 607.8 C1481.4 602.3 1493.1 597.9 1502.8 594.7 C1512.5 591.6 1522.2 589.9 1531.9 588.9 C1541.6 587.9 1552.3 587.9 1561 588.9 C1569.7 589.9 1577 591.1 1584.3 594.7 C1591.5 598.4 1598.8 605.2 1604.6 610.8 C1610.5 616.3 1614.3 622.4 1619.2 628.2 C1624.1 634 1631.3 626.3 1633.8 645.7 C1636.2 665.1 1655.1 728.2 1633.8 744.6 C1612.4 761.1 1530.9 748.5 1505.7 744.6 C1480.5 740.8 1488.7 728.6 1482.4 721.4 C1476.1 714.1 1472.7 707.8 1467.8 701 C1463 694.2 1456.4 687.9 1453.3 680.6 C1450.1 673.3 1448.4 666.1 1448.9 657.3Z" fill="url(#ballg)"/>
<g fill="none" stroke="#231c18" stroke-width="3.400" stroke-linecap="round" stroke-linejoin="round">
<path d="M1459.1 671.9 C1460.1 669.7 1463.1 662.2 1464.9 658.8 C1466.7 655.4 1468.6 653.9 1470 651.5 C1471.5 649.1 1472.3 645.9 1473.7 644.2 C1475 642.5 1473.2 644 1478 641.3 C1482.9 638.6 1493.8 631.7 1502.8 628.2 C1511.7 624.7 1523.1 622 1531.9 620.2 C1540.6 618.4 1549.6 617.5 1555.2 617.3 C1560.7 617.1 1560.7 617.8 1565.4 618.8 C1570 619.7 1575.3 621.7 1582.8 623.1 C1590.3 624.6 1605.9 626.8 1610.5 627.5"/>
<path d="M1484.6 661.7 C1492.5 659 1515.3 649.3 1531.9 645.7 C1548.5 642 1575.5 640.8 1584.3 639.9"/>
<path d="M1505.7 690.8 C1512.5 688.6 1532.4 680.5 1546.4 677.7 C1560.5 674.9 1577.7 674.5 1590.1 674.1 C1602.5 673.6 1615.6 674.7 1620.7 674.8"/>
<path d="M1478 718.5 C1483.6 718.2 1505 717.7 1511.5 717 C1518.1 716.3 1516.4 714.6 1517.3 714.1"/>
<path d="M1530.4 709.7 C1532.1 709 1533.1 707.3 1540.6 705.4 C1548.1 703.4 1560.7 699.8 1575.5 698.1 C1590.3 696.4 1620.4 695.6 1629.4 695.2"/>
</g>
<path d="M1516.6 707.5 L1530.4 710.4 L1530.4 715.5 L1517.3 716.3Z" fill="#231c18"/>
<path d="M1469.3 650.8 L1473.7 643.5 L1478.0 641.3 L1476.6 651.5 L1472.9 657.3Z" fill="#231c18"/>
<path d="M1555.2 616.9 L1565.4 616.9 L1577.0 623.1 L1568.3 624.1Z" fill="#231c18"/>
<g fill="none" stroke="#cdb083" stroke-width="2.200" stroke-linejoin="round">
<path d="M1488.2 669 C1491.7 667 1501.8 662.7 1505.7 663.1 C1509.6 663.6 1511 669 1511.5 671.9 C1512 674.8 1511.5 678.3 1508.6 680.6 C1505.7 682.9 1498 686.7 1494 685.7 C1490 684.7 1485.5 677.6 1484.6 674.8 C1483.6 672 1484.7 670.9 1488.2 669Z"/>
<path d="M1531.9 655.9 C1528.5 656.7 1515.4 658.5 1511.5 661 C1507.6 663.4 1507.9 667.6 1508.6 670.4 C1509.3 673.2 1511.3 677.1 1515.9 677.7 C1520.5 678.3 1532.8 674.7 1536.2 674.1"/>
<path d="M1553.7 651.5 L1534.8 655.9 L1537.7 671.9 L1563.9 667.5"/>
<path d="M1536.2 663.9 L1558.1 659.5"/>
<path d="M1569.7 648.6 C1574.6 646.5 1595.4 642.5 1604.6 645 C1613.9 647.4 1621.6 659.1 1625 663.1 C1628.4 667.1 1631.8 668.2 1625 669 C1618.2 669.7 1592.5 669.5 1584.3 667.5 C1576 665.6 1578 660.5 1575.5 657.3 C1573.1 654.2 1564.9 650.7 1569.7 648.6Z"/>
<path d="M1579.9 657.3 L1619.2 657.3"/>
</g>
<!-- sock -->
<path d="M1248.4 584.6 C1249.2 581.9 1257 577.2 1260.7 575.4 C1264.4 573.5 1273 571.2 1276.1 570.7 C1279.1 570.3 1281.7 570 1283.7 572.3 C1285.8 574.5 1289 583.1 1291.4 587.6 C1293.9 592.1 1298.9 601.6 1302.2 606.1 C1305.5 610.6 1312.1 617.7 1316 621.4 C1319.9 625.1 1328.1 631 1331.4 633.7 C1334.6 636.4 1341 638.1 1340.6 641.4 C1340.2 644.7 1332 654 1328.3 658.3 C1324.6 662.6 1316.2 672.4 1312.9 673.6 C1309.6 674.9 1306.6 670 1303.7 667.5 C1300.8 665 1294.3 658.5 1291.4 655.2 C1288.6 651.9 1283 645.4 1282.2 642.9 C1281.4 640.5 1286.1 639.6 1285.3 636.8 C1284.5 633.9 1278.5 624.9 1276.1 621.4 C1273.6 617.9 1269.7 614.2 1266.9 610.7 C1264 607.2 1257 598.8 1254.6 595.3 C1252.1 591.8 1247.6 587.2 1248.4 584.6Z" fill="#f7f7f3"/>
<path d="M1253 593 C1255.8 591.6 1264.3 587 1269.9 584.6 C1275.6 582.1 1284 579.5 1286.8 578.4" fill="none" stroke="#7fd4be" stroke-width="4"/>
<path d="M1260.7 603.8 C1263.3 602.5 1271 598.5 1276.1 596.1 C1281.2 593.7 1288.9 590.6 1291.4 589.5" fill="none" stroke="#7fd4be" stroke-width="4"/>
<!-- shoe -->
<path d="M1282.2 643.7 C1282.2 641.8 1290.8 644 1294.5 646 C1298.2 647.9 1305.8 657.5 1309.9 658.3 C1313.9 659.1 1321.5 654.5 1325.2 652.1 C1328.9 649.8 1333.8 642.6 1337.5 640.6 C1341.2 638.7 1348.8 637.7 1352.9 637.5 C1356.9 637.4 1364.9 638.3 1368.2 639.9 C1371.5 641.4 1375.4 645.8 1377.4 649.1 C1379.5 652.3 1379.7 661.1 1383.6 664.4 C1387.5 667.7 1400.5 671.2 1406.6 673.6 C1412.7 676.1 1423.5 680 1429.6 682.9 C1435.8 685.7 1448.4 692.1 1452.7 695.1 C1457 698.2 1460.9 702.6 1461.9 705.9 C1462.9 709.2 1461.8 715.8 1460.3 719.7 C1458.9 723.6 1453.6 732 1451.1 735.1 C1448.7 738.1 1446.8 741.6 1441.9 742.7 C1437 743.9 1421 743.5 1414.3 743.5 C1407.5 743.5 1396.4 744.3 1391.2 742.7 C1386.1 741.2 1381 734.9 1375.9 732 C1370.8 729.1 1358.4 723.7 1352.9 721.2 C1347.3 718.8 1338.5 716.6 1334.4 713.6 C1330.3 710.5 1325.4 703.1 1322.1 698.2 C1318.9 693.3 1313.5 681.8 1309.9 676.7 C1306.2 671.6 1298.2 664.2 1294.5 659.8 C1290.8 655.4 1282.2 645.5 1282.2 643.7Z" fill="#f5f1e8"/>
<path d="M1322.1 698.2 C1321.3 699.6 1330.3 710.5 1334.4 713.6 C1338.5 716.6 1347.3 718.8 1352.9 721.2 C1358.4 723.7 1370.8 729.1 1375.9 732 C1381 734.9 1386.1 741.2 1391.2 742.7 C1396.4 744.3 1407.5 743.5 1414.3 743.5 C1421 743.5 1437 743.9 1441.9 742.7 C1446.8 741.6 1452.8 736.3 1451.1 735.1 C1449.5 733.8 1436.6 734.8 1429.6 733.5 C1422.7 732.3 1407.1 728.5 1398.9 725.8 C1390.7 723.2 1376 716.6 1368.2 713.6 C1360.4 710.5 1346.7 704.9 1340.6 702.8 C1334.4 700.8 1323 696.8 1322.1 698.2Z" fill="#e4dccd"/>
<path d="M1383.6 676.7 C1387.5 674.5 1401.7 679.3 1406.6 681.3 C1411.5 683.4 1419.4 688.6 1420.4 692.1 C1421.4 695.5 1418.2 704.6 1414.3 707.4 C1410.4 710.3 1396.2 714.8 1391.2 713.6 C1386.3 712.3 1378.4 703.1 1377.4 698.2 C1376.4 693.3 1379.7 679 1383.6 676.7Z" fill="#ece6da"/>
<path d="M1337.5 646 C1334.9 649.6 1326.5 659.8 1322.1 667.5 C1317.8 675.2 1313.4 684.4 1311.4 692.1 C1309.3 699.7 1310.1 710 1309.9 713.6" fill="none" stroke="#fbf8f0" stroke-width="2.400" stroke-linecap="round"/>
<path d="M1346.7 642.9 C1343.6 646.5 1332.6 657.8 1328.3 664.4 C1323.9 671.1 1321.1 675.2 1320.6 682.9 C1320.1 690.5 1323.4 702.3 1325.2 710.5 C1327 718.7 1330.3 728.4 1331.4 732" fill="none" stroke="#fbf8f0" stroke-width="2.400" stroke-linecap="round"/>
<path d="M1337.5 642.9 C1340.6 642.4 1349.8 639.3 1355.9 639.9 C1362.1 640.4 1371.3 645 1374.3 646" fill="none" stroke="#fbf8f0" stroke-width="2.400" stroke-linecap="round"/>
<path d="M1336 652.1 C1339.3 651.6 1349.8 648 1355.9 649.1 C1362.1 650.1 1370 656.7 1372.8 658.3" fill="none" stroke="#fbf8f0" stroke-width="2.400" stroke-linecap="round"/>
<path d="M1340.6 664.4 C1343.6 663.7 1352.9 658.8 1359 659.8 C1365.1 660.8 1374.3 668.8 1377.4 670.6" fill="none" stroke="#fbf8f0" stroke-width="2.400" stroke-linecap="round"/>
<path d="M1346.7 658.3 C1349.8 657.8 1359.5 653.9 1365.1 655.2 C1370.8 656.5 1377.9 664.2 1380.5 666" fill="none" stroke="#d9d0c0" stroke-width="1.400" stroke-linecap="round"/>
<path d="M1349.8 673.6 C1352.9 673.1 1362.6 669.3 1368.2 670.6 C1373.8 671.8 1381 679.5 1383.6 681.3" fill="none" stroke="#d9d0c0" stroke-width="1.400" stroke-linecap="round"/>
<path d="M541 171 L541 742" stroke="#2a2010" stroke-width="1.500"/>
</svg>
<!-- right column -->
<svg class="a" style="left:1643px;top:41px" width="356" height="1196" viewBox="1643 41 356 1196">
<g fill="#b4b4b4"><rect x="1950" y="59" width="13.500" height="1.700"/><rect x="1950" y="64" width="13.500" height="1.700"/><rect x="1950" y="69" width="13.500" height="1.700"/>
<path d="M1719.800 102 h3.800 v14.500 h-3.800Z M1740.300 102 v14.500 l-15 -7.250Z"/>
<path d="M1771.500 102 v14.500 l-14 -7.250Z M1774 102 h3.600 v14.500 h-3.600Z"/>
<path d="M1800.200 101.500 l16 7.750 l-16 7.750Z"/>
<path d="M1838 102 h3.600 v14.500 h-3.600Z M1843.800 102 l15 7.250 l-15 7.250Z"/>
<path d="M1877.400 102 l15.400 7.250 l-15.400 7.250Z M1894.200 102 h3.800 v14.500 h-3.800Z"/></g>
<rect x="1645" y="137" width="334.500" height="2.800" fill="#161616"/>
<rect x="1645" y="185.7" width="334.500" height="2.800" fill="#161616"/>
<rect x="1645" y="234.8" width="334.500" height="2.800" fill="#161616"/>
<rect x="1645" y="881" width="334.500" height="2.800" fill="#161616"/>
<rect x="1645" y="930.3" width="334.500" height="2.800" fill="#161616"/>
<rect x="1645" y="979.6" width="334.500" height="2.800" fill="#161616"/>
<rect x="1645" y="1028.4" width="334.500" height="2.800" fill="#161616"/>
<rect x="1645" y="1078.2" width="334.500" height="2.800" fill="#161616"/>
<rect x="1645" y="1127" width="334.500" height="2.800" fill="#161616"/>
<rect x="1644.200" y="240.400" width="335.700" height="594.600" fill="none" stroke="#2d7fd6" stroke-width="2"/>
<g fill="#b4b4b4"><rect x="1950" y="258" width="13.500" height="1.700"/><rect x="1950" y="263" width="13.500" height="1.700"/><rect x="1950" y="268" width="13.500" height="1.700"/></g>
<rect x="1652.500" y="290" width="319" height="30" rx="3.500" fill="#141414" stroke="#2b2b2b" stroke-width="1"/>
<circle cx="1674" cy="301.500" r="5.300" fill="none" stroke="#2d8ceb" stroke-width="1.900"/><path d="M1670.300 305.500 L1663.800 312" stroke="#2d8ceb" stroke-width="2.200" stroke-linecap="round"/><path d="M1681 307.300 h9 l-4.500 4.500Z" fill="#2d8ceb"/>
<path d="M1953 300 L1964.500 312 M1964.500 300 L1953 312" stroke="#d8d8d8" stroke-width="2"/>
<rect x="1645" y="325.0" width="334" height="1.200" fill="#1e1e1e"/>
<path d="M1655.0 338.0 l5.5 5.5 l5.5 -5.5" stroke="#b4b4b4" stroke-width="1.800" fill="none"/>
<rect x="1645" y="352.9" width="334" height="1.200" fill="#1e1e1e"/>
<path d="M1682.7 365.9 l5.5 5.5 l5.5 -5.5" stroke="#b4b4b4" stroke-width="1.800" fill="none"/>
<path fill="#b4b4b4" d="M1699.0 358.4 h9 v1.600 h-9Z M1699.0 361.9 h10.500 l1.500 1.500 h11.300 v13.500 h-23.300Z"/>
<rect x="1645" y="380.7" width="334" height="1.200" fill="#1e1e1e"/>
<path d="M1710.4 393.7 l5.5 5.5 l5.5 -5.5" stroke="#b4b4b4" stroke-width="1.800" fill="none"/>
<path fill="#b4b4b4" d="M1726.7 386.2 h9 v1.600 h-9Z M1726.7 389.7 h10.500 l1.500 1.500 h11.300 v13.500 h-23.300Z"/>
<rect x="1645" y="408.6" width="334" height="1.200" fill="#1e1e1e"/>
<path d="M1738.3 421.6 l5.5 5.5 l5.5 -5.5" stroke="#b4b4b4" stroke-width="1.800" fill="none"/>
<path fill="#b4b4b4" d="M1754.6 414.1 h9 v1.600 h-9Z M1754.6 417.6 h10.500 l1.500 1.500 h11.300 v13.500 h-23.300Z"/>
<rect x="1645" y="436.4" width="334" height="1.200" fill="#1e1e1e"/>
<path fill="#b4b4b4" d="M1784.0 445.7 h2.700 v-3 h5.700 v3 h3.800 v-3 h5.700 v3 h2.100 v15 h-20Z"/>
<rect x="1645" y="464.2" width="334" height="1.200" fill="#1e1e1e"/>
<path d="M1710.4 477.2 l5.5 5.5 l5.5 -5.5" stroke="#b4b4b4" stroke-width="1.800" fill="none"/>
<path fill="#b4b4b4" d="M1726.7 469.8 h9 v1.600 h-9Z M1726.7 473.2 h10.500 l1.500 1.500 h11.300 v13.500 h-23.300Z"/>
<rect x="1645" y="492.1" width="334" height="1.200" fill="#1e1e1e"/>
<path fill="#b4b4b4" d="M1756.4 501.4 h2.700 v-3 h5.700 v3 h3.800 v-3 h5.700 v3 h2.100 v15 h-20Z"/>
<rect x="1645" y="520.0" width="334" height="1.200" fill="#1e1e1e"/>
<path fill="#b4b4b4" d="M1756.4 529.2 h2.700 v-3 h5.700 v3 h3.800 v-3 h5.700 v3 h2.100 v15 h-20Z"/>
<rect x="1645" y="547.8" width="334" height="1.200" fill="#1e1e1e"/>
<path d="M1655.0 560.8 l5.5 5.5 l5.5 -5.5" stroke="#b4b4b4" stroke-width="1.800" fill="none"/>
<rect x="1645" y="575.6" width="334" height="1.200" fill="#1e1e1e"/>
<path fill="#b4b4b4" d="M1700.3 584.9 h2.700 v-3 h5.700 v3 h3.800 v-3 h5.700 v3 h2.100 v15 h-20Z"/>
<rect x="1645" y="603.5" width="334" height="1.200" fill="#1e1e1e"/>
<path fill="#b4b4b4" d="M1700.3 612.8 h2.700 v-3 h5.700 v3 h3.800 v-3 h5.700 v3 h2.100 v15 h-20Z"/>
<rect x="1645" y="631.4" width="334" height="1.200" fill="#1e1e1e"/>
<rect x="1645" y="632.6" width="334" height="26.7" fill="#333"/>
<rect x="1726.700" y="634.9" width="100.300" height="22.500" fill="#a9a9a9"/>
<path fill="#b4b4b4" d="M1700.3 640.6 h2.700 v-3 h5.700 v3 h3.800 v-3 h5.700 v3 h2.100 v15 h-20Z"/>
<rect x="1645" y="659.2" width="334" height="1.200" fill="#1e1e1e"/>
<path d="M1655.0 672.2 l5.5 5.5 l5.5 -5.5" stroke="#b4b4b4" stroke-width="1.800" fill="none"/>
<rect x="1645" y="687.0" width="334" height="1.200" fill="#1e1e1e"/>
<path fill="#b4b4b4" d="M1700.3 696.3 h2.700 v-3 h5.700 v3 h3.800 v-3 h5.700 v3 h2.100 v15 h-20Z"/>
<rect x="1645" y="714.9" width="334" height="1.200" fill="#1e1e1e"/>
<path d="M1655.0 727.9 l5.5 5.5 l5.5 -5.5" stroke="#b4b4b4" stroke-width="1.800" fill="none"/>
<rect x="1645" y="742.8" width="334" height="1.200" fill="#1e1e1e"/>
<path fill="#b4b4b4" d="M1700.3 752.0 h2.700 v-3 h5.700 v3 h3.800 v-3 h5.700 v3 h2.100 v15 h-20Z"/>
<rect x="1645" y="770.6" width="334" height="1.200" fill="#1e1e1e"/>
<path fill="#b4b4b4" d="M1700.3 779.9 h2.700 v-3 h5.700 v3 h3.800 v-3 h5.700 v3 h2.100 v15 h-20Z"/>
<rect x="1645" y="799" width="334" height="1.200" fill="#1e1e1e"/>
<rect x="1645.200" y="800" width="333.700" height="2.200" fill="#141414"/>
<rect x="1977" y="802" width="1.800" height="27" fill="#141414"/>
<path fill="#b4b4b4" d="M1953 805 h15 v19.500 h-9.500 v-5.500 h-5.500Z M1948 820.500 h9 v4.500Z"/>
</svg>
<div class="t sb" style="left:1663px;top:55px;font-size:17.500px;color:#dedede;letter-spacing:0.25px">Preview</div>
<div class="t" style="left:1663px;top:155px;font-size:17.500px;color:#b4b4b4;letter-spacing:0.32px">Align</div>
<div class="t" style="left:1663px;top:204px;font-size:17.500px;color:#b4b4b4;letter-spacing:0.25px">Audio</div>
<div class="t sb" style="left:1663px;top:253.500px;font-size:17.500px;color:#dedede;letter-spacing:-0.05px">Effects &amp; Presets</div>
<div class="t" style="left:1699px;top:297px;font-size:18px;color:#e2e2e2;letter-spacing:0.08px">radial</div>
<div class="t tr" style="left:1669.500px;top:330.7px;letter-spacing:0.31px">* Animation Presets</div>
<div class="t tr" style="left:1730.5px;top:358.6px;letter-spacing:-0.35px">Presets</div>
<div class="t tr" style="left:1758.5px;top:386.4px;letter-spacing:0.05px">Text</div>
<div class="t tr" style="left:1786px;top:414.2px;letter-spacing:-0.13px">Curves and Spins</div>
<div class="t" style="left:1789.0px;top:445.1px;font-size:14.500px;font-style:italic;font-family:'Liberation Serif',serif;color:#262626;letter-spacing:-0.500px">fx</div>
<div class="t tr" style="left:1814.6px;top:442.1px;letter-spacing:-0.06px">Radial Flare</div>
<div class="t tr" style="left:1758.5px;top:469.9px;letter-spacing:0.05px">Transitions - Wipes</div>
<div class="t" style="left:1761.4px;top:500.8px;font-size:14.500px;font-style:italic;font-family:'Liberation Serif',serif;color:#262626;letter-spacing:-0.500px">fx</div>
<div class="t tr" style="left:1786px;top:497.8px;letter-spacing:0.28px">Radial Wipe - bottom</div>
<div class="t" style="left:1761.4px;top:528.7px;font-size:14.500px;font-style:italic;font-family:'Liberation Serif',serif;color:#262626;letter-spacing:-0.500px">fx</div>
<div class="t tr" style="left:1786px;top:525.7px;letter-spacing:0.16px">Radial Wipe - top</div>
<div class="t tr" style="left:1669.500px;top:553.5px;letter-spacing:0.12px">Blur &amp; Sharpen</div>
<div class="t" style="left:1701.7px;top:583.8px;font-size:15px;color:#262626;letter-spacing:-0.700px;font-weight:bold">32</div>
<div class="t tr" style="left:1730.500px;top:581.4px;letter-spacing:-0.19px">CC Radial Blur</div>
<div class="t" style="left:1701.7px;top:611.6px;font-size:15px;color:#262626;letter-spacing:-0.700px;font-weight:bold">16</div>
<div class="t tr" style="left:1730.500px;top:609.2px;letter-spacing:-0.24px">CC Radial Fast Blur</div>
<div class="t" style="left:1701.7px;top:639.5px;font-size:15px;color:#262626;letter-spacing:-0.700px;font-weight:bold">32</div>
<div class="t tr" style="left:1730.500px;top:637.1px;letter-spacing:0.05px;color:#1c1c1c">Radial Blur</div>
<div class="t tr" style="left:1669.500px;top:664.9px;letter-spacing:0.04px">Perspective</div>
<div class="t" style="left:1706.1px;top:695.1px;font-size:15px;color:#262626;letter-spacing:-0.700px;font-weight:bold">8</div>
<div class="t tr" style="left:1730.500px;top:692.8px;letter-spacing:-0.00px">Radial Shadow</div>
<div class="t tr" style="left:1669.500px;top:720.6px;letter-spacing:0.14px">Transition</div>
<div class="t" style="left:1701.7px;top:750.9px;font-size:15px;color:#262626;letter-spacing:-0.700px;font-weight:bold">16</div>
<div class="t tr" style="left:1730.500px;top:748.5px;letter-spacing:-0.28px">CC Radial ScaleWipe</div>
<div class="t" style="left:1701.7px;top:778.7px;font-size:15px;color:#262626;letter-spacing:-0.700px;font-weight:bold">32</div>
<div class="t tr" style="left:1730.500px;top:776.3px;letter-spacing:0.03px">Radial Wipe</div>
<div class="t" style="left:1663px;top:850.5px;font-size:17.500px;color:#b4b4b4;letter-spacing:0.25px">Properties</div>
<div class="t" style="left:1663px;top:899.8px;font-size:17.500px;color:#b4b4b4;letter-spacing:-0.02px">Character</div>
<div class="t" style="left:1663px;top:949.2px;font-size:17.500px;color:#b4b4b4;letter-spacing:-0.15px">Tracker</div>
<div class="t" style="left:1663px;top:998px;font-size:17.500px;color:#b4b4b4;letter-spacing:-0.14px">Brushes</div>
<div class="t" style="left:1663px;top:1047.6px;font-size:17.500px;color:#b4b4b4;letter-spacing:0.06px">Paint</div>
<div class="t" style="left:1663px;top:1096.7px;font-size:17.500px;color:#b4b4b4;letter-spacing:0.35px">Info</div>
<!-- timeline panel -->
<div class="a" style="left:1001px;top:969px;width:606px;height:237px;background:#2a2a2a"></div>
<div class="a" style="left:1012px;top:969px;width:584px;height:237px;background:#343434"></div>
<div class="a" style="left:3px;top:971px;width:995px;height:26px;background:#484848"></div>
<div class="a" style="left:1001px;top:970px;width:606px;height:27px;background:#444"></div>
<div class="a" style="left:1001px;top:905px;width:33.500px;height:24px;overflow:hidden"><div class="t" style="right:0;top:5px;font-size:15px;color:#b4b4b4;letter-spacing:0">0:00s</div></div>
<div class="t" style="left:1143px;top:910px;font-size:15px;color:#b4b4b4;letter-spacing:0.44px">02s</div>
<div class="t" style="left:1288px;top:910px;font-size:15px;color:#b4b4b4;letter-spacing:0.44px">04s</div>
<div class="t" style="left:1432.500px;top:910px;font-size:15px;color:#b4b4b4;letter-spacing:0.44px">06s</div>
<div class="t" style="left:1577px;top:910px;font-size:15px;color:#b4b4b4;letter-spacing:0.44px">08s</div>
<svg class="a" style="left:0;top:834px" width="1640" height="403" viewBox="0 834 1640 403">
<defs>
<filter id="grain" x="0" y="0" width="100%" height="100%"><feTurbulence type="fractalNoise" baseFrequency="0.9" numOctaves="2" seed="3" result="n"/><feColorMatrix in="n" type="matrix" values="0 0 0 0 0.5  0 0 0 0 0.64  0 0 0 0 0.62  0.9 0 0 0 -0.25"/><feComposite operator="in" in2="SourceGraphic"/></filter>
</defs>
<!-- tab -->
<path d="M19 853.500 L28 862.500 M28 853.500 L19 862.500" stroke="#a0a0a0" stroke-width="1.400"/>
<rect x="44" y="848" width="17" height="16.500" fill="#ab987a"/>
<g fill="#b4b4b4"><rect x="126" y="852.500" width="13.500" height="1.700"/><rect x="126" y="857.500" width="13.500" height="1.700"/><rect x="126" y="862.500" width="13.500" height="1.700"/></g>
<!-- search -->
<rect x="167.500" y="893" width="556" height="30.500" rx="3.500" fill="#161616" stroke="#2c2c2c" stroke-width="1"/>
<circle cx="188.500" cy="906.500" r="5.800" fill="none" stroke="#b4b4b4" stroke-width="1.800"/><path d="M184.500 911 L178 917" stroke="#b4b4b4" stroke-width="2.200" stroke-linecap="round"/><path d="M196.500 911 h8.500 l-4.250 4.300Z" fill="#b4b4b4"/>
<!-- top icons -->
<g fill="#b4b4b4" stroke="none">
<path d="M749.500 901.500 h3 v-1.500 h7.500 v1.500 h5 v-2 h8.500 v5.500 h-8.500 v-2 h-1.500 v7 h1.500 v-2 h8.500 v5.500 h-8.500 v-2 h-3 v-8.500 h-2 v1.500 h-7.500 v-1.500 h-3Z M770 916.500 h7.500 l-3.750 4Z"/>
<path d="M806.500 908.500 C806.500 896 830.500 896 830.500 908.500 L826 908.500 L826 906.500 L823 906.500 L823 908.500 L821 908.500 L821 915 C821 918 816 918 816 915 L816 908.500 L814 908.500 L814 906.500 L811 906.500 L811 908.500Z"/>
</g>
<circle cx="813.500" cy="902.500" r="1.600" fill="#262626"/><circle cx="823.500" cy="902.500" r="1.600" fill="#262626"/>
<rect x="805" y="910.500" width="27" height="7.500" fill="#6e6e6e"/>
<path d="M816 908 h5 v7 c0 3 -5 3 -5 0Z" fill="#b4b4b4"/>
<g fill="none" stroke="#b4b4b4" stroke-width="1.500"><path d="M849.500 903 v16 h14"/><path d="M852.500 900.500 v16 h4"/></g>
<rect x="855.500" y="897.500" width="17" height="17.500" fill="#b4b4b4"/>
<g fill="#262626"><rect x="856.700" y="899" width="2" height="2"/><rect x="856.700" y="902.700" width="2" height="2"/><rect x="856.700" y="906.400" width="2" height="2"/><rect x="856.700" y="910.100" width="2" height="2"/><rect x="869.300" y="899" width="2" height="2"/><rect x="869.300" y="902.700" width="2" height="2"/><rect x="869.300" y="906.400" width="2" height="2"/><rect x="869.300" y="910.100" width="2" height="2"/><rect x="861" y="905" width="6" height="1.600"/></g>
<g stroke="#b4b4b4" stroke-width="1.600"><circle cx="900" cy="911.500" r="7.500" fill="#262626"/><circle cx="903" cy="908.500" r="7.500" fill="#262626"/><circle cx="906.500" cy="905.500" r="7.800" fill="#777"/></g>
<g fill="none" stroke="#b4b4b4" stroke-width="1.700"><rect x="948" y="898.500" width="23" height="21"/><path d="M953.500 898.500 v-3 M959.500 898.500 v-3 M965.500 898.500 v-3 M948 904 h-2.500 M948 914 h-2.500"/><path d="M951 901.500 C960 901.500 958 915.500 968.500 915.500"/></g>
<!-- header row -->
<g fill="#161616"><rect x="113.500" y="943" width="1.800" height="24"/><rect x="165.500" y="943" width="1.800" height="24"/><rect x="219.500" y="943" width="1.800" height="24"/><rect x="555.500" y="943" width="1.800" height="24"/><rect x="780.500" y="943" width="1.800" height="24"/><rect x="972.500" y="943" width="1.800" height="24"/></g>
<!-- eye -->
<path d="M12 955 C16 947.500 25 947.500 29 955 C25 962.500 16 962.500 12 955Z" fill="#b4b4b4"/><circle cx="20.500" cy="955" r="3.600" fill="#262626"/><circle cx="20.500" cy="955" r="1.800" fill="#b4b4b4"/>
<!-- speaker -->
<path d="M36.500 951.500 h4 l5.500 -5.500 v18 l-5.500 -5.500 h-4Z" fill="#b4b4b4"/><path d="M48.500 950.500 a5 5 0 0 1 0 9 M50 946.500 a9.500 9.500 0 0 1 0 17" fill="none" stroke="#b4b4b4" stroke-width="1.700"/>
<circle cx="69.500" cy="955" r="5.500" fill="#b4b4b4"/>
<!-- lock -->
<path d="M89.500 953 v-3.500 c0 -6 9.500 -6 9.500 0 v3.500" fill="none" stroke="#b4b4b4" stroke-width="2.200"/><rect x="86.500" y="952.500" width="15.500" height="11" fill="#b4b4b4"/><path d="M94.250 955 a1.800 1.800 0 1 1 -0.010 0Z M93.400 957.500 h1.700 l0.800 3.500 h-3.300Z" fill="#262626"/>
<!-- tag -->
<path d="M136.500 945.500 h8.500 l11.500 11.500 l-8.500 8.500 l-11.500 -11.500Z" fill="#b4b4b4"/><circle cx="140.500" cy="949.500" r="1.700" fill="#262626"/>
<!-- switches header icons -->
<g fill="#b4b4b4"><path d="M566 955.500 C566 945 584 945 584 955.500 L580.500 955.500 L580.500 954 L578.500 954 L578.500 955.500 L577 955.500 L577 961 C577 963.500 573 963.500 573 961 L573 955.500 L571.500 955.500 L571.500 954 L569.500 954 L569.500 955.500Z M565 958.500 h6.500 v1.600 h-6.500Z M578.500 958.500 h6.500 v1.600 h-6.500Z"/></g>
<circle cx="571.500" cy="951" r="1.400" fill="#262626"/><circle cx="578.500" cy="951" r="1.400" fill="#262626"/>
<circle cx="599.300" cy="955.500" r="3.400" fill="#b4b4b4"/><path d="M599.300 947.500 v16 M591.300 955.500 h16 M593.600 949.800 l11.400 11.400 M605 949.800 l-11.400 11.400" stroke="#b4b4b4" stroke-width="1.500"/>
<path d="M614.500 947 L632 962.500" stroke="#b4b4b4" stroke-width="2.800" stroke-dasharray="2.600 1.600"/>
<g fill="none" stroke="#b4b4b4" stroke-width="1.400"><path d="M662.700 951.500 v12 h14"/></g>
<rect x="665.500" y="946.500" width="16.500" height="14.500" fill="#b4b4b4"/>
<g fill="#262626"><rect x="666.700" y="948" width="1.800" height="1.800"/><rect x="666.700" y="951.300" width="1.800" height="1.800"/><rect x="666.700" y="954.600" width="1.800" height="1.800"/><rect x="666.700" y="957.900" width="1.800" height="1.800"/><rect x="679" y="948" width="1.800" height="1.800"/><rect x="679" y="951.300" width="1.800" height="1.800"/><rect x="679" y="954.600" width="1.800" height="1.800"/><rect x="679" y="957.900" width="1.800" height="1.800"/><rect x="670.500" y="952.700" width="6.500" height="1.600"/></g>
<g stroke="#b4b4b4" stroke-width="1.400"><circle cx="693.500" cy="958.500" r="5.800" fill="#262626"/><circle cx="696.500" cy="955.500" r="5.800" fill="#262626"/><circle cx="701" cy="952" r="6.800" fill="#777"/></g>
<circle cx="722" cy="955.500" r="8" fill="none" stroke="#b4b4b4" stroke-width="1.700"/><path d="M716.300 961.200 A8 8 0 0 0 727.700 949.800Z" fill="#b4b4b4"/>
<g fill="none" stroke="#b4b4b4" stroke-width="1.600" stroke-linejoin="round"><path d="M747 947.500 l7.500 3.500 v8.500 l-7.500 3.500 l-7.500 -3.500 v-8.500Z M739.500 951 l7.500 3.500 l7.500 -3.500 M747 954.500 v8.500"/></g>
<!-- layer row cells -->
<g fill="#3a3a3a"><rect x="11" y="972.500" width="21.500" height="23"/><rect x="35" y="972.500" width="21.500" height="23"/><rect x="59" y="972.500" width="21.500" height="23"/><rect x="83" y="972.500" width="21.500" height="23"/>
<rect x="564" y="972.500" width="21.500" height="23"/><rect x="613.500" y="972.500" width="21" height="23"/><rect x="638" y="972.500" width="21" height="23"/><rect x="662.500" y="972.500" width="21.500" height="23"/><rect x="687" y="972.500" width="21.500" height="23"/><rect x="711.500" y="972.500" width="21.500" height="23"/><rect x="736" y="972.500" width="21.500" height="23"/></g>
<path d="M12 984 C16 976.500 25 976.500 29 984 C25 991.500 16 991.500 12 984Z" fill="#c4c4c4"/><circle cx="20.500" cy="984" r="3.600" fill="#3a3a3a"/><circle cx="20.500" cy="984" r="1.800" fill="#c4c4c4"/>
<path d="M36.500 980.500 h4 l5.500 -5.500 v18 l-5.500 -5.500 h-4Z" fill="#c4c4c4"/><path d="M48.500 979.500 a5 5 0 0 1 0 9 M50 975.500 a9.500 9.500 0 0 1 0 17" fill="none" stroke="#c4c4c4" stroke-width="1.700"/>
<path d="M124.500 978 L130 984 L124.500 990" stroke="#b4b4b4" stroke-width="1.700" fill="none"/>
<rect x="142.500" y="974" width="20" height="20" fill="#a6cfca"/>
<path d="M228.500 975 h10.500 l5 5 v14 h-15.500Z" fill="#e8e8e8"/><path d="M239 975 v5 h5Z" fill="#9a9a9a"/><rect x="230.500" y="980" width="11.500" height="11" rx="2" fill="#2a3a5a"/><circle cx="236.200" cy="985.500" r="3.200" fill="#3c8ee0"/><circle cx="236.200" cy="985.500" r="1.400" fill="#d8e8f8"/>
<rect x="251" y="971" width="305" height="26" fill="#a9a9a9"/>
<g fill="#c4c4c4"><path d="M566 984.500 C566 974 584 974 584 984.500 L580.500 984.500 L580.500 983 L578.500 983 L578.500 984.500 L577 984.500 L577 990 C577 992.500 573 992.500 573 990 L573 984.500 L571.500 984.500 L571.500 983 L569.500 983 L569.500 984.500Z M565 987.500 h6.500 v1.600 h-6.500Z M578.500 987.500 h6.500 v1.600 h-6.500Z"/></g>
<circle cx="571.500" cy="980" r="1.400" fill="#3a3a3a"/><circle cx="578.500" cy="980" r="1.400" fill="#3a3a3a"/>
<path d="M616 992.500 L632 975.500" stroke="#c4c4c4" stroke-width="2"/>
<path d="M799.500 984.500 c0 -2.500 3.500 -2.500 3.500 0.300 c0 4.500 -7.500 4 -7.500 -1 c0 -6.500 11.500 -6.500 11.500 1 c0 7 -9 9.500 -14 5 c-4.500 -4.500 -2.500 -12 3.500 -14" fill="none" stroke="#b4b4b4" stroke-width="1.500"/>
<rect x="819.500" y="972" width="146.500" height="24.500" fill="#232323"/>
<path d="M945.500 981 L951.500 987 L957.500 981" stroke="#d0d0d0" stroke-width="1.900" fill="none"/>
<!-- time navigator -->
<rect x="1000" y="889.500" width="608" height="15.500" rx="4" fill="#161616"/>
<rect x="1002" y="891" width="604" height="12.500" rx="3" fill="#636363"/>
<path d="M1010 891 h-4.500 a4 4 0 0 0 -4 4 v4.500 a4 4 0 0 0 4 4 h4.500Z M1598 891 h4.500 a4 4 0 0 1 4 4 v4.500 a4 4 0 0 1 -4 4 h-4.500Z" fill="#2d8ceb"/>
<g fill="#b4b4b4"><rect x="1011.700" y="928" width="1.300" height="7.500"/><rect x="1156.300" y="928" width="1.300" height="7.500"/><rect x="1445.400" y="928" width="1.300" height="7.500"/><rect x="1590" y="928" width="1.300" height="7.500"/></g>
<!-- work area -->
<rect x="1000" y="936.500" width="608" height="27" rx="3" fill="#161616"/>
<rect x="1002" y="938" width="604" height="24" fill="#636363"/>
<path d="M1009.500 938 h-4 a3.500 3.500 0 0 0 -3.500 3.500 v17 a3.500 3.500 0 0 0 3.500 3.500 h4Z M1598.500 938 h4 a3.500 3.500 0 0 1 3.500 3.500 v17 a3.500 3.500 0 0 1 -3.500 3.500 h-4Z" fill="#2d8ceb"/>
<rect x="1285.500" y="964.500" width="33" height="4.300" fill="#1fb02c"/>
<!-- layer bar -->
<path d="M1011.600 997 V978 a7.500 7.500 0 0 1 7.500 -7.500 H1588 a7.500 7.500 0 0 1 7.500 7.500 V997Z" fill="#8fb5b0"/>
<path d="M1011.600 997 V978 a7.500 7.500 0 0 1 7.500 -7.500 H1588 a7.500 7.500 0 0 1 7.500 7.500 V997Z" fill="#fff" filter="url(#grain)" opacity="0.55"/>
<path d="M1011.600 970.500 h8 a8 8 0 0 0 -8 8Z M1595.500 970.500 h-8 a8 8 0 0 1 8 8Z" fill="#111"/>
<rect x="1053" y="976.500" width="25.500" height="23" fill="none" stroke="#5c8db0" stroke-opacity="0.8" stroke-width="1.500"/>
<rect x="1083" y="977" width="98.500" height="22.500" fill="none" stroke="#5c8db0" stroke-opacity="0.8" stroke-width="1.500"/>
<rect x="999.300" y="888" width="1.700" height="318" fill="#141414"/>
<rect x="1606.800" y="936" width="1.500" height="270" fill="#1a1a1a"/>
<!-- marker bin / right icons -->
<path d="M1613 941 h19.500 v13.500 l-9.750 9 l-9.750 -9Z" fill="#b4b4b4"/>
<path d="M1620 977 h12.500 v11.500 h-6" fill="#b4b4b4"/><path d="M1621.500 977.500 l-11 8.500 h8" fill="none" stroke="#b4b4b4" stroke-width="1.600"/><circle cx="1620" cy="989.500" r="4.300" fill="#262626" stroke="#b4b4b4" stroke-width="1.800"/>
<!-- playhead -->
<rect x="1300.300" y="891" width="1.800" height="13" fill="#2d8ceb"/><rect x="1300.300" y="920" width="1.800" height="286" fill="#2d8ceb"/>
<path d="M1291.300 914.500 h20 v9.500 l-10 12.500 l-10 -12.500Z" fill="#2d8ceb"/>
<rect x="1296" y="918" width="10.500" height="1.600" fill="#555"/>
<!-- bottom bar -->
<rect x="3" y="1205.500" width="1634" height="1.500" fill="#161616"/>
<rect x="13" y="1209.500" width="21.500" height="21.500" rx="2" fill="#1a1a1a"/>
<g fill="none" stroke="#2d8ceb" stroke-width="1.500"><rect x="16" y="1212.500" width="10" height="10"/><rect x="19" y="1215.500" width="10" height="10"/><rect x="22" y="1218.500" width="10" height="10" fill="#1a1a1a"/></g><rect x="25.500" y="1222" width="3" height="3" fill="#2d8ceb"/>
<g fill="none" stroke="#b4b4b4" stroke-width="1.600"><circle cx="53.500" cy="1217" r="6"/><rect x="55" y="1219" width="9.500" height="9.500" fill="#262626"/></g>
<path d="M82 1211.500 c-3 0 -3 2 -3 4 c0 3 -2.500 3.500 -2.500 4.500 c0 1 2.500 1.500 2.500 4.500 c0 2 0 4 3 4 M90 1211.500 c3 0 3 2 3 4 c0 3 2.500 3.500 2.500 4.500 c0 1 -2.500 1.500 -2.500 4.500 c0 2 0 4 -3 4" fill="none" stroke="#b4b4b4" stroke-width="2"/><rect x="83.500" y="1213" width="5" height="14" fill="#b4b4b4"/>
<path d="M108 1224 c0 -6 2 -12 8 -12 c6 0 7 6 7 12Z" fill="#b4b4b4"/><path d="M121 1214 l7 -2 l-3 12" fill="none" stroke="#b4b4b4" stroke-width="1.600"/><rect x="107" y="1224" width="18" height="2.500" fill="#b4b4b4"/>
<rect x="561.500" y="1209" width="218.500" height="22.500" rx="3" fill="#2c2c2c" stroke="#1a1a1a" stroke-width="1"/>
<path d="M1007 1222.500 l9 -7 l9 7Z" fill="#b4b4b4"/>
<rect x="1056" y="1220" width="65" height="1.500" fill="#4a4a4a"/>
<circle cx="1050.500" cy="1221" r="5.300" fill="#262626" stroke="#b4b4b4" stroke-width="2"/>
<path d="M1140 1225 l10 -10.500 l6 6 l4 -3.500 l9 8Z" fill="#b4b4b4"/>
</svg>
<div class="t" style="left:79px;top:849.500px;font-size:17.500px;color:#dcdcdc;letter-spacing:0.56px">ball</div>
<div class="t" style="left:23px;top:888.500px;font-size:23px;font-weight:bold;color:#2d8ceb;letter-spacing:0.80px">0:00:04:00</div>
<div class="t" style="left:20px;top:916px;font-size:15.800px;color:#1d6db4;letter-spacing:0.22px">00100 (25.00 fps)</div>
<div class="t" style="left:176px;top:948px;font-size:14px;color:#a0a0a0">#</div>
<div class="t" style="left:229.500px;top:948px;font-size:14.800px;color:#a0a0a0;letter-spacing:-0.01px">Layer Name</div>
<div class="t" style="left:790px;top:948px;font-size:14.800px;color:#a0a0a0;letter-spacing:0.20px">Parent &amp; Link</div>
<div class="t" style="left:638px;top:942px;font-size:22px;color:#b4b4b4;font-style:italic;font-family:'Liberation Serif',serif;letter-spacing:-1px">fx</div>
<div class="t" style="left:638.500px;top:970.500px;font-size:22px;color:#c8c8c8;font-style:italic;font-family:'Liberation Serif',serif;letter-spacing:-1px">fx</div>
<div class="t sb" style="left:177.500px;top:975.500px;font-size:17px;color:#b4b4b4">1</div>
<div class="t" style="left:256px;top:975px;font-size:18px;color:#1a1a1a;letter-spacing:0.85px">[ball.mp4]</div>
<div class="t" style="left:830px;top:975px;font-size:18.500px;color:#e4e4e4;letter-spacing:-0.31px">None</div>
<div class="t" style="left:173.500px;top:1211.500px;font-size:17.500px;color:#a8a8a8;letter-spacing:0.08px">Frame Render Time</div>
<div class="t" style="left:340px;top:1211.500px;font-size:17px;font-weight:bold;color:#e8823c;letter-spacing:0.09px">1.33s</div>
<div class="t" style="left:570.500px;top:1211.500px;font-size:17.500px;color:#c4c4c4;letter-spacing:0.21px">Toggle Switches / Modes</div>
<!-- annotation arrow -->
<svg class="a" style="left:0;top:0;pointer-events:none" width="1999" height="1237" viewBox="0 0 1999 1237">
<path d="M1110 989.700 L1141.700 960.100 L1143.700 963.400 L1681.400 642.300 A2.700 2.700 0 0 1 1684.200 646.900 L1148.600 971.500 L1150.600 974.800Z" fill="#00f30c"/>
</svg>
</body>
</html>
